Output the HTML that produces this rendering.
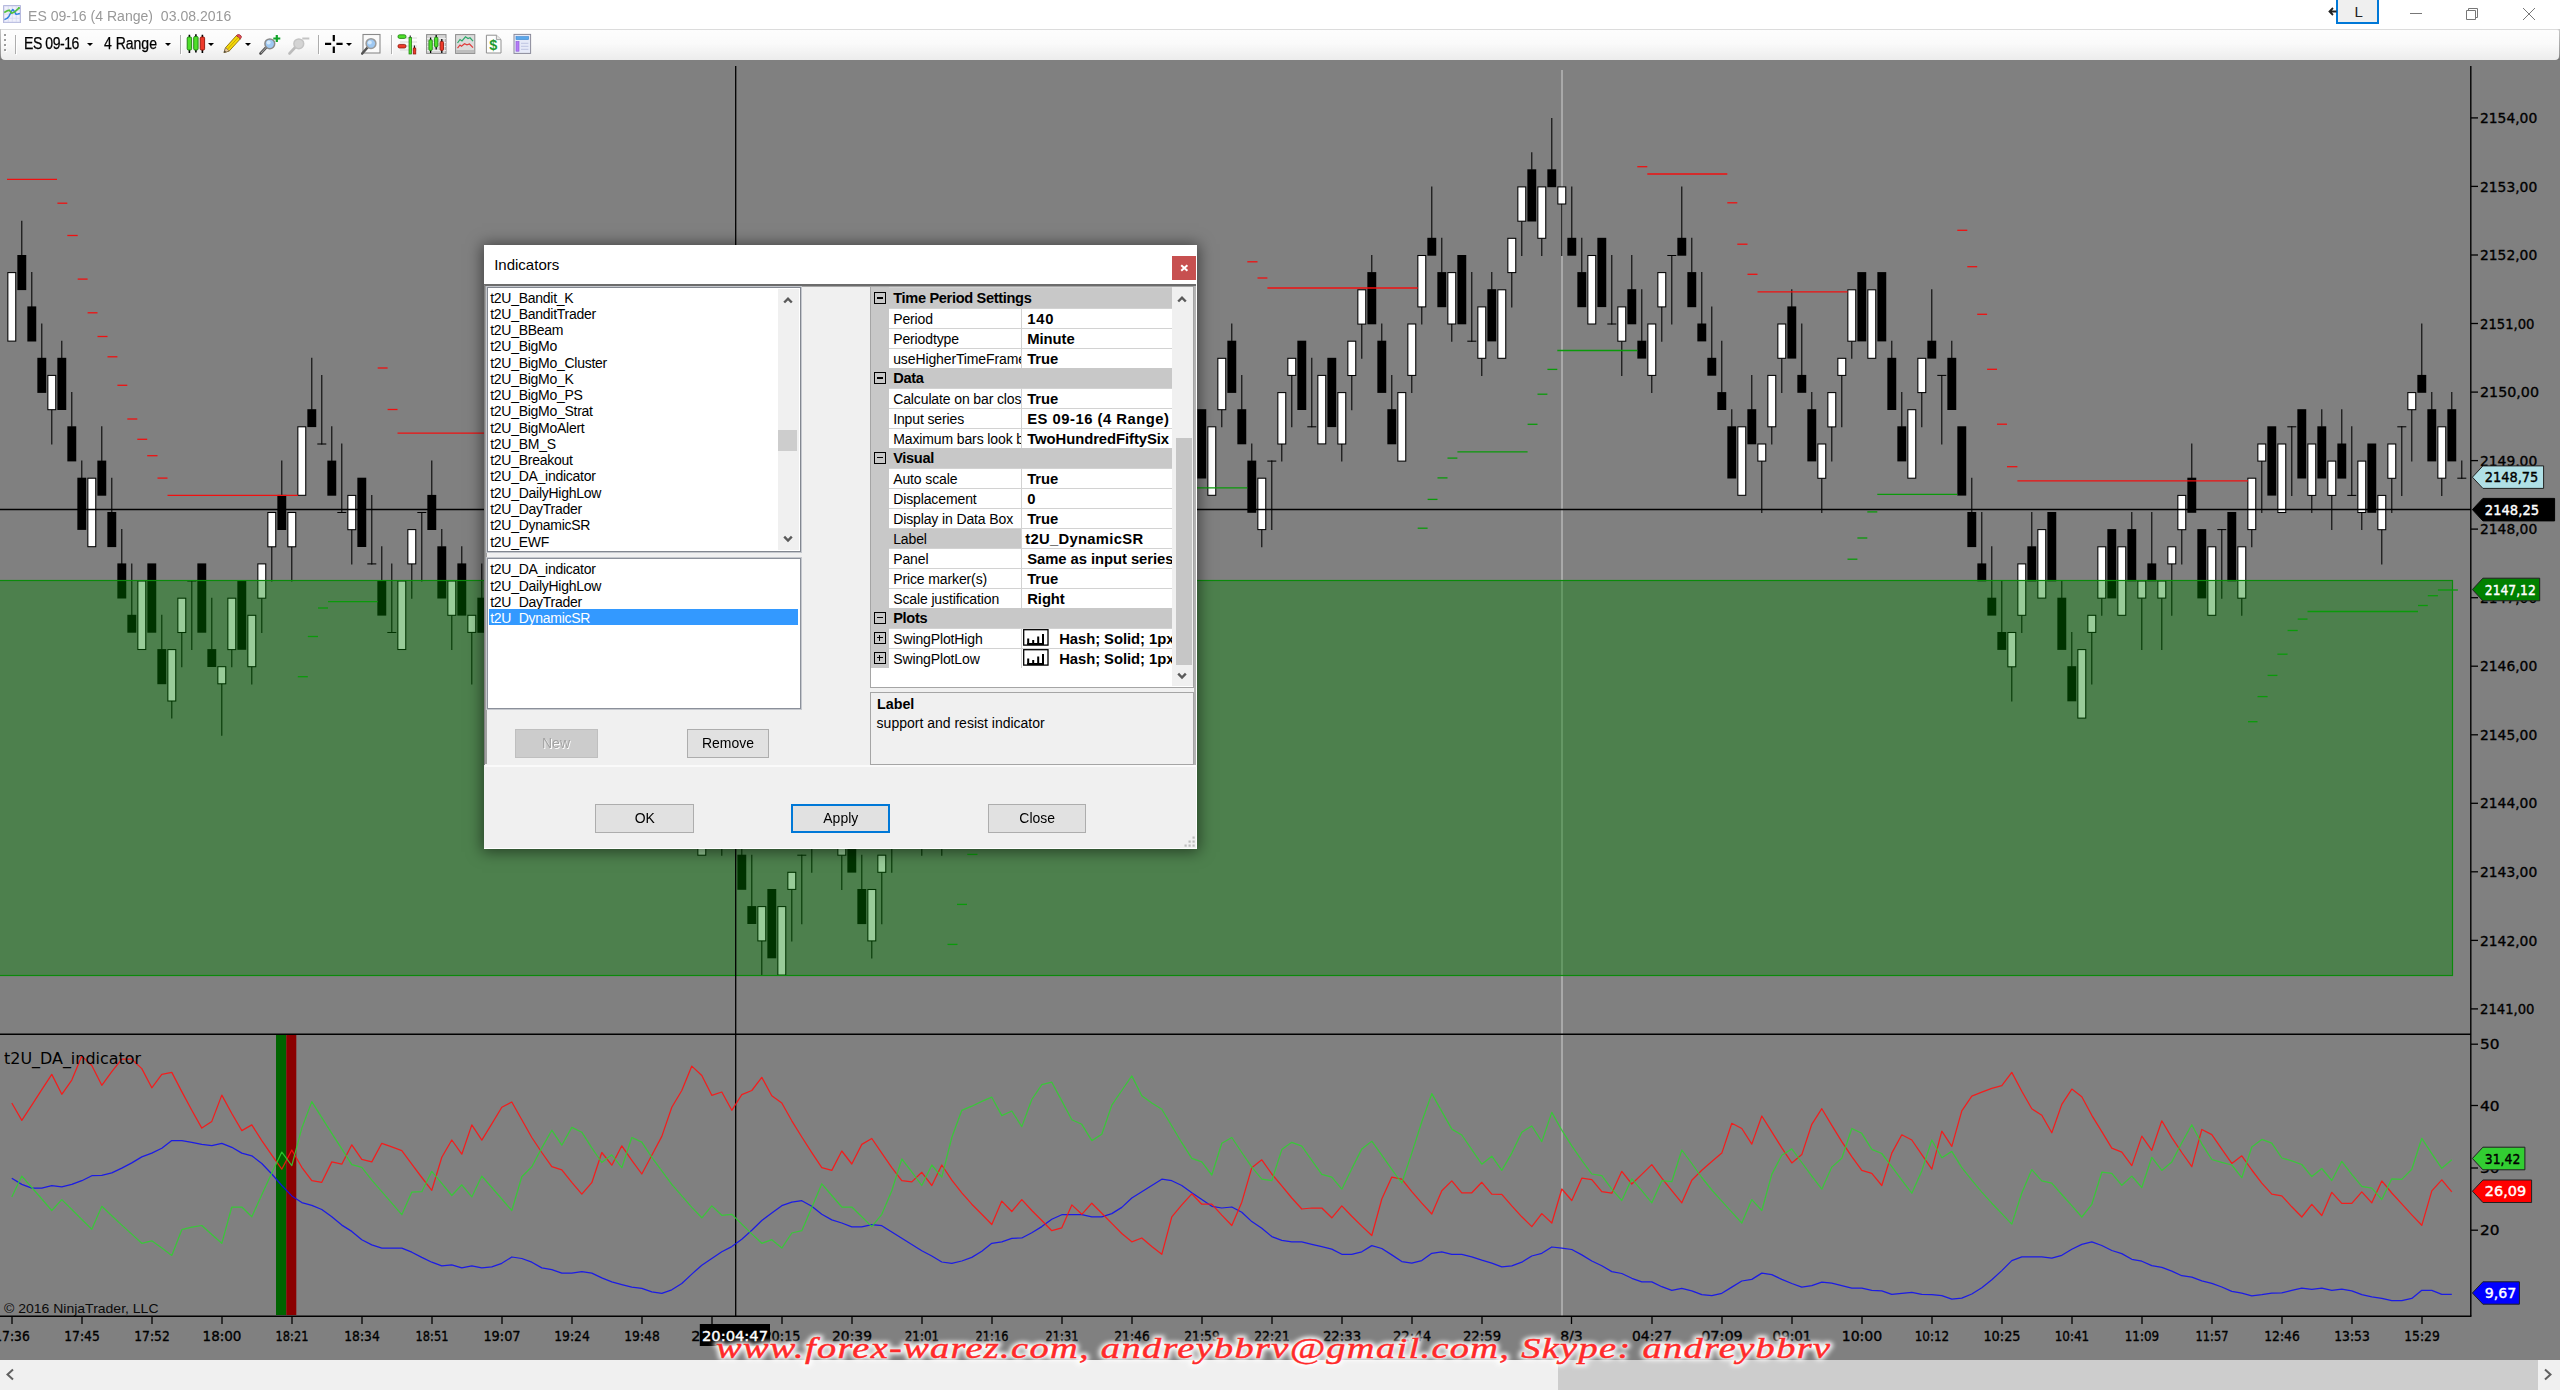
<!DOCTYPE html>
<html lang="en"><head><meta charset="utf-8"><title>ES 09-16 (4 Range) 03.08.2016</title>
<style>
html,body{margin:0;padding:0;}
body{width:2560px;height:1390px;position:relative;overflow:hidden;background:#808080;font-family:"Liberation Sans",sans-serif;}
.abs{position:absolute;}
.t{position:absolute;white-space:nowrap;color:#000;}
#titlebar{left:0;top:0;width:2560px;height:29px;background:#fff;}
#toolbarbg{left:0;top:29px;width:2560px;height:31px;background:linear-gradient(#c8c8c8,#9a9a9a 80%,#707070);}
#toolbar{left:0.8px;top:29px;width:2558.3px;height:31px;background:linear-gradient(#fdfdfd,#fafafa 45%,#ececec);border-top:1px solid #dcdcdc;box-sizing:border-box;border-radius:0 2px 4px 4px;}
.sep{position:absolute;top:35px;width:1px;height:19px;background:#adadad;box-shadow:1px 1px 0 #fff;}
.dd{position:absolute;top:42.8px;width:0;height:0;margin-left:-0.5px;border-left:3.6px solid transparent;border-right:3.6px solid transparent;border-top:3.9px solid #000;}
#scroll{left:0;top:1360px;width:2560px;height:30px;background:#f0f0f0;}
#thumb{left:1557.5px;top:1360px;width:980.5px;height:30px;background:#cdcdcd;}
/* dialog */
#dlg{left:484px;top:245px;width:713px;height:604px;background:#f0f0f0;box-shadow:0 1px 14px 2px rgba(0,0,0,.50);}
#dlgtitle{left:0;top:0;width:713px;height:40px;background:#fff;}
#dlgclose{left:688px;top:11px;width:24px;height:24px;background:#c75050;}
.lb{position:absolute;background:#fff;border:1px solid #8b909a;box-shadow:0 0 0 1px #c5c8ce;box-sizing:border-box;}
.li{position:absolute;left:2.6px;font-size:14px;letter-spacing:-0.27px;line-height:16px;white-space:nowrap;color:#000;}
.btn span{display:inline-block;transform:scaleX(.93);}
.btn{position:absolute;box-sizing:border-box;border:1px solid #adadad;background:#e1e1e1;font-size:15px;text-align:center;color:#000;}
.pgcat{position:absolute;left:0;width:300.8px;height:20px;background:#c8c8c8;}
.pgn{position:absolute;left:18px;width:132px;height:19px;background:#fff;overflow:hidden;}
.pgv{position:absolute;left:151px;width:149.8px;height:19px;background:#fff;overflow:hidden;}
.pgn span,.pgv span,.pgcat span{position:absolute;top:1px;line-height:19.5px;white-space:nowrap;}
.pgn span{left:4px;font-size:14px;letter-spacing:-0.12px;}
.pgv span{left:5px;font-size:14.8px;font-weight:bold;letter-spacing:-0.05px;}
.pgcat span{left:22px;font-size:14.6px;font-weight:bold;letter-spacing:-0.33px;line-height:19px;}
.box{position:absolute;left:2.5px;width:10px;height:10px;border:1.2px solid #000;box-sizing:content-box;}
.box i{position:absolute;left:2px;top:4.4px;width:6px;height:1.2px;background:#000;}
.box b{position:absolute;left:4.4px;top:2px;width:1.2px;height:6px;background:#000;}
</style></head><body>
<svg class="chart" width="2560" height="1390" viewBox="0 0 2560 1390" style="position:absolute;left:0;top:0">
<rect x="0" y="60" width="2560" height="1300" fill="#808080"/>
<line x1="1562" y1="70" x2="1562" y2="1316" stroke="#c4c4c4" stroke-width="1.2"/>
<g stroke="#000" stroke-width="1.05" shape-rendering="geometricPrecision">
<rect x="7.85" y="272.6" width="7.9" height="68.5" fill="#fff"/>
<line x1="21.8" y1="220.7" x2="21.8" y2="255.5"/>
<rect x="17.35" y="255.0" width="8.9" height="35.1" fill="#000" stroke="none"/>
<line x1="31.8" y1="272.1" x2="31.8" y2="306.9"/>
<rect x="27.35" y="306.4" width="8.9" height="35.1" fill="#000" stroke="none"/>
<line x1="41.8" y1="323.5" x2="41.8" y2="358.3"/>
<rect x="37.35" y="357.8" width="8.9" height="35.1" fill="#000" stroke="none"/>
<line x1="51.8" y1="409.7" x2="51.8" y2="444.5"/>
<rect x="47.85" y="375.4" width="7.9" height="34.3" fill="#fff"/>
<line x1="61.8" y1="340.7" x2="61.8" y2="358.3"/>
<rect x="57.35" y="357.8" width="8.9" height="52.2" fill="#000" stroke="none"/>
<line x1="71.8" y1="392.1" x2="71.8" y2="426.8"/>
<rect x="67.35" y="426.3" width="8.9" height="35.1" fill="#000" stroke="none"/>
<line x1="81.8" y1="460.6" x2="81.8" y2="478.2"/>
<rect x="77.35" y="477.7" width="8.9" height="52.2" fill="#000" stroke="none"/>
<rect x="87.85" y="478.2" width="7.9" height="68.5" fill="#fff"/>
<line x1="101.8" y1="426.3" x2="101.8" y2="461.1"/>
<rect x="97.35" y="460.6" width="8.9" height="35.1" fill="#000" stroke="none"/>
<line x1="111.8" y1="477.7" x2="111.8" y2="512.5"/>
<rect x="107.35" y="512.0" width="8.9" height="35.1" fill="#000" stroke="none"/>
<line x1="121.8" y1="529.1" x2="121.8" y2="563.9"/>
<rect x="117.35" y="563.4" width="8.9" height="35.1" fill="#000" stroke="none"/>
<line x1="131.8" y1="563.4" x2="131.8" y2="615.3"/>
<rect x="127.35" y="614.8" width="8.9" height="17.9" fill="#000" stroke="none"/>
<rect x="137.85" y="581.0" width="7.9" height="68.5" fill="#fff"/>
<rect x="147.35" y="563.4" width="8.9" height="69.3" fill="#000" stroke="none"/>
<line x1="161.8" y1="614.8" x2="161.8" y2="649.6"/>
<rect x="157.35" y="649.1" width="8.9" height="35.1" fill="#000" stroke="none"/>
<line x1="171.8" y1="701.0" x2="171.8" y2="718.6"/>
<rect x="167.85" y="649.6" width="7.9" height="51.4" fill="#fff"/>
<line x1="181.8" y1="632.5" x2="181.8" y2="667.2"/>
<rect x="177.85" y="598.2" width="7.9" height="34.3" fill="#fff"/>
<line x1="191.8" y1="580.5" x2="191.8" y2="650.1"/>
<line x1="187.3" y1="581.0" x2="196.3" y2="581.0"/>
<rect x="197.35" y="563.4" width="8.9" height="69.3" fill="#000" stroke="none"/>
<line x1="211.8" y1="597.7" x2="211.8" y2="649.6"/>
<rect x="207.35" y="649.1" width="8.9" height="17.9" fill="#000" stroke="none"/>
<line x1="221.8" y1="683.9" x2="221.8" y2="735.8"/>
<rect x="217.85" y="666.7" width="7.9" height="17.1" fill="#fff"/>
<line x1="231.8" y1="649.6" x2="231.8" y2="667.2"/>
<rect x="227.85" y="598.2" width="7.9" height="51.4" fill="#fff"/>
<rect x="237.35" y="580.5" width="8.9" height="69.3" fill="#000" stroke="none"/>
<line x1="251.8" y1="666.7" x2="251.8" y2="684.4"/>
<rect x="247.85" y="615.3" width="7.9" height="51.4" fill="#fff"/>
<line x1="261.8" y1="598.2" x2="261.8" y2="633.0"/>
<rect x="257.85" y="563.9" width="7.9" height="34.3" fill="#fff"/>
<line x1="271.8" y1="546.8" x2="271.8" y2="581.5"/>
<rect x="267.85" y="512.5" width="7.9" height="34.3" fill="#fff"/>
<line x1="281.8" y1="460.6" x2="281.8" y2="495.4"/>
<rect x="277.35" y="494.9" width="8.9" height="35.1" fill="#000" stroke="none"/>
<line x1="291.8" y1="546.8" x2="291.8" y2="581.5"/>
<rect x="287.85" y="512.5" width="7.9" height="34.3" fill="#fff"/>
<rect x="297.85" y="426.8" width="7.9" height="68.5" fill="#fff"/>
<line x1="311.8" y1="357.8" x2="311.8" y2="409.7"/>
<rect x="307.35" y="409.2" width="8.9" height="17.9" fill="#000" stroke="none"/>
<line x1="321.8" y1="374.9" x2="321.8" y2="444.5"/>
<line x1="317.3" y1="444.0" x2="326.3" y2="444.0"/>
<line x1="331.8" y1="426.3" x2="331.8" y2="461.1"/>
<rect x="327.35" y="460.6" width="8.9" height="35.1" fill="#000" stroke="none"/>
<line x1="341.8" y1="443.5" x2="341.8" y2="513.0"/>
<line x1="337.3" y1="512.5" x2="346.3" y2="512.5"/>
<line x1="351.8" y1="529.6" x2="351.8" y2="564.4"/>
<rect x="347.85" y="495.4" width="7.9" height="34.3" fill="#fff"/>
<rect x="357.35" y="477.7" width="8.9" height="69.3" fill="#000" stroke="none"/>
<line x1="371.8" y1="494.9" x2="371.8" y2="564.4"/>
<line x1="367.3" y1="563.9" x2="376.3" y2="563.9"/>
<line x1="381.8" y1="546.3" x2="381.8" y2="581.0"/>
<rect x="377.35" y="580.5" width="8.9" height="35.1" fill="#000" stroke="none"/>
<line x1="391.8" y1="563.4" x2="391.8" y2="633.0"/>
<line x1="387.3" y1="632.5" x2="396.3" y2="632.5"/>
<rect x="397.85" y="581.0" width="7.9" height="68.5" fill="#fff"/>
<line x1="411.8" y1="563.9" x2="411.8" y2="598.7"/>
<rect x="407.85" y="529.6" width="7.9" height="34.3" fill="#fff"/>
<line x1="421.8" y1="512.0" x2="421.8" y2="581.5"/>
<line x1="417.3" y1="512.5" x2="426.3" y2="512.5"/>
<line x1="431.8" y1="460.6" x2="431.8" y2="495.4"/>
<rect x="427.35" y="494.9" width="8.9" height="35.1" fill="#000" stroke="none"/>
<line x1="441.8" y1="529.1" x2="441.8" y2="546.8"/>
<rect x="437.35" y="546.3" width="8.9" height="52.2" fill="#000" stroke="none"/>
<line x1="451.8" y1="615.3" x2="451.8" y2="650.1"/>
<rect x="447.85" y="581.0" width="7.9" height="34.3" fill="#fff"/>
<line x1="461.8" y1="546.3" x2="461.8" y2="563.9"/>
<rect x="457.35" y="563.4" width="8.9" height="52.2" fill="#000" stroke="none"/>
<line x1="471.8" y1="632.5" x2="471.8" y2="684.4"/>
<rect x="467.85" y="615.3" width="7.9" height="17.1" fill="#fff"/>
<line x1="481.8" y1="563.4" x2="481.8" y2="598.2"/>
<rect x="477.35" y="597.7" width="8.9" height="35.1" fill="#000" stroke="none"/>
<rect x="697.85" y="820.9" width="7.9" height="34.3" fill="#fff"/>
<line x1="721.8" y1="820.9" x2="721.8" y2="855.7"/>
<rect x="717.85" y="786.7" width="7.9" height="34.3" fill="#fff"/>
<line x1="741.8" y1="820.4" x2="741.8" y2="855.2"/>
<rect x="737.35" y="854.7" width="8.9" height="35.1" fill="#000" stroke="none"/>
<line x1="751.8" y1="854.7" x2="751.8" y2="906.6"/>
<rect x="747.35" y="906.1" width="8.9" height="17.9" fill="#000" stroke="none"/>
<line x1="761.8" y1="940.9" x2="761.8" y2="975.7"/>
<rect x="757.85" y="906.6" width="7.9" height="34.3" fill="#fff"/>
<rect x="767.35" y="889.0" width="8.9" height="69.3" fill="#000" stroke="none"/>
<rect x="777.85" y="906.6" width="7.9" height="68.5" fill="#fff"/>
<line x1="791.8" y1="889.5" x2="791.8" y2="941.4"/>
<rect x="787.85" y="872.3" width="7.9" height="17.1" fill="#fff"/>
<line x1="801.8" y1="854.7" x2="801.8" y2="924.2"/>
<line x1="797.3" y1="855.2" x2="806.3" y2="855.2"/>
<line x1="811.8" y1="838.1" x2="811.8" y2="872.8"/>
<rect x="807.85" y="803.8" width="7.9" height="34.3" fill="#fff"/>
<line x1="841.8" y1="855.2" x2="841.8" y2="890.0"/>
<rect x="837.85" y="820.9" width="7.9" height="34.3" fill="#fff"/>
<rect x="847.35" y="803.3" width="8.9" height="69.3" fill="#000" stroke="none"/>
<line x1="861.8" y1="854.7" x2="861.8" y2="889.5"/>
<rect x="857.35" y="889.0" width="8.9" height="35.1" fill="#000" stroke="none"/>
<line x1="871.8" y1="940.9" x2="871.8" y2="958.5"/>
<rect x="867.85" y="889.5" width="7.9" height="51.4" fill="#fff"/>
<line x1="881.8" y1="872.3" x2="881.8" y2="924.2"/>
<rect x="877.85" y="855.2" width="7.9" height="17.1" fill="#fff"/>
<line x1="891.8" y1="838.1" x2="891.8" y2="872.8"/>
<rect x="887.85" y="803.8" width="7.9" height="34.3" fill="#fff"/>
<line x1="921.8" y1="820.9" x2="921.8" y2="855.7"/>
<rect x="917.85" y="786.7" width="7.9" height="34.3" fill="#fff"/>
<line x1="941.8" y1="820.9" x2="941.8" y2="855.7"/>
<rect x="937.85" y="786.7" width="7.9" height="34.3" fill="#fff"/>
<rect x="1197.35" y="409.2" width="8.9" height="69.3" fill="#000" stroke="none"/>
<rect x="1207.85" y="426.8" width="7.9" height="68.5" fill="#fff"/>
<line x1="1221.8" y1="409.7" x2="1221.8" y2="427.3"/>
<rect x="1217.85" y="358.3" width="7.9" height="51.4" fill="#fff"/>
<line x1="1231.8" y1="323.5" x2="1231.8" y2="341.2"/>
<rect x="1227.35" y="340.7" width="8.9" height="52.2" fill="#000" stroke="none"/>
<line x1="1241.8" y1="374.9" x2="1241.8" y2="409.7"/>
<rect x="1237.35" y="409.2" width="8.9" height="35.1" fill="#000" stroke="none"/>
<line x1="1251.8" y1="443.5" x2="1251.8" y2="461.1"/>
<rect x="1247.35" y="460.6" width="8.9" height="52.2" fill="#000" stroke="none"/>
<line x1="1261.8" y1="529.6" x2="1261.8" y2="547.3"/>
<rect x="1257.85" y="478.2" width="7.9" height="51.4" fill="#fff"/>
<line x1="1271.8" y1="460.6" x2="1271.8" y2="530.1"/>
<line x1="1267.3" y1="461.1" x2="1276.3" y2="461.1"/>
<line x1="1281.8" y1="444.0" x2="1281.8" y2="461.6"/>
<rect x="1277.85" y="392.6" width="7.9" height="51.4" fill="#fff"/>
<line x1="1291.8" y1="375.4" x2="1291.8" y2="427.3"/>
<rect x="1287.85" y="358.3" width="7.9" height="17.1" fill="#fff"/>
<rect x="1297.35" y="340.7" width="8.9" height="69.3" fill="#000" stroke="none"/>
<line x1="1311.8" y1="357.8" x2="1311.8" y2="427.3"/>
<line x1="1307.3" y1="426.8" x2="1316.3" y2="426.8"/>
<rect x="1317.85" y="375.4" width="7.9" height="68.5" fill="#fff"/>
<rect x="1327.35" y="357.8" width="8.9" height="69.3" fill="#000" stroke="none"/>
<line x1="1341.8" y1="444.0" x2="1341.8" y2="461.6"/>
<rect x="1337.85" y="392.6" width="7.9" height="51.4" fill="#fff"/>
<line x1="1351.8" y1="375.4" x2="1351.8" y2="410.2"/>
<rect x="1347.85" y="341.2" width="7.9" height="34.3" fill="#fff"/>
<line x1="1361.8" y1="324.0" x2="1361.8" y2="358.8"/>
<rect x="1357.85" y="289.8" width="7.9" height="34.3" fill="#fff"/>
<line x1="1371.8" y1="255.0" x2="1371.8" y2="272.6"/>
<rect x="1367.35" y="272.1" width="8.9" height="52.2" fill="#000" stroke="none"/>
<line x1="1381.8" y1="323.5" x2="1381.8" y2="341.2"/>
<rect x="1377.35" y="340.7" width="8.9" height="52.2" fill="#000" stroke="none"/>
<line x1="1391.8" y1="374.9" x2="1391.8" y2="409.7"/>
<rect x="1387.35" y="409.2" width="8.9" height="35.1" fill="#000" stroke="none"/>
<rect x="1397.85" y="392.6" width="7.9" height="68.5" fill="#fff"/>
<line x1="1411.8" y1="375.4" x2="1411.8" y2="393.1"/>
<rect x="1407.85" y="324.0" width="7.9" height="51.4" fill="#fff"/>
<line x1="1421.8" y1="306.9" x2="1421.8" y2="324.5"/>
<rect x="1417.85" y="255.5" width="7.9" height="51.4" fill="#fff"/>
<line x1="1431.8" y1="186.4" x2="1431.8" y2="238.3"/>
<rect x="1427.35" y="237.8" width="8.9" height="17.9" fill="#000" stroke="none"/>
<line x1="1441.8" y1="237.8" x2="1441.8" y2="272.6"/>
<rect x="1437.35" y="272.1" width="8.9" height="35.1" fill="#000" stroke="none"/>
<line x1="1451.8" y1="324.0" x2="1451.8" y2="341.7"/>
<rect x="1447.85" y="272.6" width="7.9" height="51.4" fill="#fff"/>
<rect x="1457.35" y="255.0" width="8.9" height="69.3" fill="#000" stroke="none"/>
<line x1="1471.8" y1="272.1" x2="1471.8" y2="341.7"/>
<line x1="1467.3" y1="341.2" x2="1476.3" y2="341.2"/>
<line x1="1481.8" y1="358.3" x2="1481.8" y2="375.9"/>
<rect x="1477.85" y="306.9" width="7.9" height="51.4" fill="#fff"/>
<line x1="1491.8" y1="272.1" x2="1491.8" y2="289.8"/>
<rect x="1487.35" y="289.2" width="8.9" height="52.2" fill="#000" stroke="none"/>
<rect x="1497.85" y="289.8" width="7.9" height="68.5" fill="#fff"/>
<line x1="1511.8" y1="272.6" x2="1511.8" y2="307.4"/>
<rect x="1507.85" y="238.3" width="7.9" height="34.3" fill="#fff"/>
<line x1="1521.8" y1="221.2" x2="1521.8" y2="256.0"/>
<rect x="1517.85" y="186.9" width="7.9" height="34.3" fill="#fff"/>
<line x1="1531.8" y1="152.2" x2="1531.8" y2="169.8"/>
<rect x="1527.35" y="169.3" width="8.9" height="52.2" fill="#000" stroke="none"/>
<line x1="1541.8" y1="238.3" x2="1541.8" y2="256.0"/>
<rect x="1537.85" y="186.9" width="7.9" height="51.4" fill="#fff"/>
<line x1="1551.8" y1="117.9" x2="1551.8" y2="169.8"/>
<rect x="1547.35" y="169.3" width="8.9" height="17.9" fill="#000" stroke="none"/>
<line x1="1561.8" y1="204.1" x2="1561.8" y2="256.0"/>
<rect x="1557.85" y="186.9" width="7.9" height="17.1" fill="#fff"/>
<line x1="1571.8" y1="186.4" x2="1571.8" y2="238.3"/>
<rect x="1567.35" y="237.8" width="8.9" height="17.9" fill="#000" stroke="none"/>
<line x1="1581.8" y1="237.8" x2="1581.8" y2="272.6"/>
<rect x="1577.35" y="272.1" width="8.9" height="35.1" fill="#000" stroke="none"/>
<rect x="1587.85" y="255.5" width="7.9" height="68.5" fill="#fff"/>
<rect x="1597.35" y="237.8" width="8.9" height="69.3" fill="#000" stroke="none"/>
<line x1="1611.8" y1="255.0" x2="1611.8" y2="324.5"/>
<line x1="1607.3" y1="324.0" x2="1616.3" y2="324.0"/>
<line x1="1621.8" y1="341.2" x2="1621.8" y2="375.9"/>
<rect x="1617.85" y="306.9" width="7.9" height="34.3" fill="#fff"/>
<line x1="1631.8" y1="255.0" x2="1631.8" y2="289.8"/>
<rect x="1627.35" y="289.2" width="8.9" height="35.1" fill="#000" stroke="none"/>
<line x1="1641.8" y1="289.2" x2="1641.8" y2="341.2"/>
<rect x="1637.35" y="340.7" width="8.9" height="17.9" fill="#000" stroke="none"/>
<line x1="1651.8" y1="375.4" x2="1651.8" y2="393.1"/>
<rect x="1647.85" y="324.0" width="7.9" height="51.4" fill="#fff"/>
<line x1="1661.8" y1="306.9" x2="1661.8" y2="341.7"/>
<rect x="1657.85" y="272.6" width="7.9" height="34.3" fill="#fff"/>
<line x1="1671.8" y1="255.0" x2="1671.8" y2="324.5"/>
<line x1="1667.3" y1="255.5" x2="1676.3" y2="255.5"/>
<line x1="1681.8" y1="186.4" x2="1681.8" y2="238.3"/>
<rect x="1677.35" y="237.8" width="8.9" height="17.9" fill="#000" stroke="none"/>
<line x1="1691.8" y1="237.8" x2="1691.8" y2="272.6"/>
<rect x="1687.35" y="272.1" width="8.9" height="35.1" fill="#000" stroke="none"/>
<line x1="1701.8" y1="272.1" x2="1701.8" y2="324.0"/>
<rect x="1697.35" y="323.5" width="8.9" height="17.9" fill="#000" stroke="none"/>
<line x1="1711.8" y1="306.4" x2="1711.8" y2="358.3"/>
<rect x="1707.35" y="357.8" width="8.9" height="17.9" fill="#000" stroke="none"/>
<line x1="1721.8" y1="340.7" x2="1721.8" y2="392.6"/>
<rect x="1717.35" y="392.1" width="8.9" height="17.9" fill="#000" stroke="none"/>
<line x1="1731.8" y1="409.2" x2="1731.8" y2="426.8"/>
<rect x="1727.35" y="426.3" width="8.9" height="52.2" fill="#000" stroke="none"/>
<rect x="1737.85" y="426.8" width="7.9" height="68.5" fill="#fff"/>
<line x1="1751.8" y1="374.9" x2="1751.8" y2="409.7"/>
<rect x="1747.35" y="409.2" width="8.9" height="35.1" fill="#000" stroke="none"/>
<line x1="1761.8" y1="461.1" x2="1761.8" y2="513.0"/>
<rect x="1757.85" y="444.0" width="7.9" height="17.1" fill="#fff"/>
<line x1="1771.8" y1="426.8" x2="1771.8" y2="444.5"/>
<rect x="1767.85" y="375.4" width="7.9" height="51.4" fill="#fff"/>
<line x1="1781.8" y1="358.3" x2="1781.8" y2="393.1"/>
<rect x="1777.85" y="324.0" width="7.9" height="34.3" fill="#fff"/>
<line x1="1791.8" y1="289.2" x2="1791.8" y2="306.9"/>
<rect x="1787.35" y="306.4" width="8.9" height="52.2" fill="#000" stroke="none"/>
<line x1="1801.8" y1="323.5" x2="1801.8" y2="375.4"/>
<rect x="1797.35" y="374.9" width="8.9" height="17.9" fill="#000" stroke="none"/>
<line x1="1811.8" y1="392.1" x2="1811.8" y2="409.7"/>
<rect x="1807.35" y="409.2" width="8.9" height="52.2" fill="#000" stroke="none"/>
<line x1="1821.8" y1="478.2" x2="1821.8" y2="513.0"/>
<rect x="1817.85" y="444.0" width="7.9" height="34.3" fill="#fff"/>
<line x1="1831.8" y1="426.8" x2="1831.8" y2="461.6"/>
<rect x="1827.85" y="392.6" width="7.9" height="34.3" fill="#fff"/>
<line x1="1841.8" y1="375.4" x2="1841.8" y2="427.3"/>
<rect x="1837.85" y="358.3" width="7.9" height="17.1" fill="#fff"/>
<line x1="1851.8" y1="341.2" x2="1851.8" y2="358.8"/>
<rect x="1847.85" y="289.8" width="7.9" height="51.4" fill="#fff"/>
<rect x="1857.35" y="272.1" width="8.9" height="69.3" fill="#000" stroke="none"/>
<rect x="1867.85" y="289.8" width="7.9" height="68.5" fill="#fff"/>
<rect x="1877.35" y="272.1" width="8.9" height="69.3" fill="#000" stroke="none"/>
<line x1="1891.8" y1="340.7" x2="1891.8" y2="358.3"/>
<rect x="1887.35" y="357.8" width="8.9" height="52.2" fill="#000" stroke="none"/>
<line x1="1901.8" y1="392.1" x2="1901.8" y2="426.8"/>
<rect x="1897.35" y="426.3" width="8.9" height="35.1" fill="#000" stroke="none"/>
<rect x="1907.85" y="409.7" width="7.9" height="68.5" fill="#fff"/>
<line x1="1921.8" y1="392.6" x2="1921.8" y2="427.3"/>
<rect x="1917.85" y="358.3" width="7.9" height="34.3" fill="#fff"/>
<line x1="1931.8" y1="289.2" x2="1931.8" y2="341.2"/>
<rect x="1927.35" y="340.7" width="8.9" height="17.9" fill="#000" stroke="none"/>
<line x1="1941.8" y1="374.9" x2="1941.8" y2="444.5"/>
<line x1="1937.3" y1="375.4" x2="1946.3" y2="375.4"/>
<line x1="1951.8" y1="340.7" x2="1951.8" y2="358.3"/>
<rect x="1947.35" y="357.8" width="8.9" height="52.2" fill="#000" stroke="none"/>
<rect x="1957.35" y="426.3" width="8.9" height="69.3" fill="#000" stroke="none"/>
<line x1="1971.8" y1="477.7" x2="1971.8" y2="512.5"/>
<rect x="1967.35" y="512.0" width="8.9" height="35.1" fill="#000" stroke="none"/>
<line x1="1981.8" y1="512.0" x2="1981.8" y2="563.9"/>
<rect x="1977.35" y="563.4" width="8.9" height="17.9" fill="#000" stroke="none"/>
<line x1="1991.8" y1="546.3" x2="1991.8" y2="598.2"/>
<rect x="1987.35" y="597.7" width="8.9" height="17.9" fill="#000" stroke="none"/>
<line x1="2001.8" y1="580.5" x2="2001.8" y2="632.5"/>
<rect x="1997.35" y="632.0" width="8.9" height="17.9" fill="#000" stroke="none"/>
<line x1="2011.8" y1="666.7" x2="2011.8" y2="701.5"/>
<rect x="2007.85" y="632.5" width="7.9" height="34.3" fill="#fff"/>
<line x1="2021.8" y1="615.3" x2="2021.8" y2="633.0"/>
<rect x="2017.85" y="563.9" width="7.9" height="51.4" fill="#fff"/>
<line x1="2031.8" y1="512.0" x2="2031.8" y2="546.8"/>
<rect x="2027.35" y="546.3" width="8.9" height="35.1" fill="#000" stroke="none"/>
<rect x="2037.85" y="529.6" width="7.9" height="68.5" fill="#fff"/>
<rect x="2047.35" y="512.0" width="8.9" height="69.3" fill="#000" stroke="none"/>
<line x1="2061.8" y1="580.5" x2="2061.8" y2="598.2"/>
<rect x="2057.35" y="597.7" width="8.9" height="52.2" fill="#000" stroke="none"/>
<line x1="2071.8" y1="632.0" x2="2071.8" y2="666.7"/>
<rect x="2067.35" y="666.2" width="8.9" height="35.1" fill="#000" stroke="none"/>
<rect x="2077.85" y="649.6" width="7.9" height="68.5" fill="#fff"/>
<line x1="2091.8" y1="632.5" x2="2091.8" y2="684.4"/>
<rect x="2087.85" y="615.3" width="7.9" height="17.1" fill="#fff"/>
<line x1="2101.8" y1="598.2" x2="2101.8" y2="615.8"/>
<rect x="2097.85" y="546.8" width="7.9" height="51.4" fill="#fff"/>
<rect x="2107.35" y="529.1" width="8.9" height="69.3" fill="#000" stroke="none"/>
<rect x="2117.85" y="546.8" width="7.9" height="68.5" fill="#fff"/>
<line x1="2131.8" y1="512.0" x2="2131.8" y2="529.6"/>
<rect x="2127.35" y="529.1" width="8.9" height="52.2" fill="#000" stroke="none"/>
<line x1="2141.8" y1="598.2" x2="2141.8" y2="650.1"/>
<rect x="2137.85" y="581.0" width="7.9" height="17.1" fill="#fff"/>
<line x1="2151.8" y1="512.0" x2="2151.8" y2="563.9"/>
<rect x="2147.35" y="563.4" width="8.9" height="17.9" fill="#000" stroke="none"/>
<line x1="2161.8" y1="598.2" x2="2161.8" y2="650.1"/>
<rect x="2157.85" y="581.0" width="7.9" height="17.1" fill="#fff"/>
<line x1="2171.8" y1="563.9" x2="2171.8" y2="615.8"/>
<rect x="2167.85" y="546.8" width="7.9" height="17.1" fill="#fff"/>
<line x1="2181.8" y1="529.6" x2="2181.8" y2="564.4"/>
<rect x="2177.85" y="495.4" width="7.9" height="34.3" fill="#fff"/>
<line x1="2191.8" y1="443.5" x2="2191.8" y2="478.2"/>
<rect x="2187.35" y="477.7" width="8.9" height="35.1" fill="#000" stroke="none"/>
<rect x="2197.35" y="529.1" width="8.9" height="69.3" fill="#000" stroke="none"/>
<rect x="2207.85" y="546.8" width="7.9" height="68.5" fill="#fff"/>
<line x1="2221.8" y1="529.1" x2="2221.8" y2="598.7"/>
<line x1="2217.3" y1="529.6" x2="2226.3" y2="529.6"/>
<rect x="2227.35" y="512.0" width="8.9" height="69.3" fill="#000" stroke="none"/>
<line x1="2241.8" y1="598.2" x2="2241.8" y2="615.8"/>
<rect x="2237.85" y="546.8" width="7.9" height="51.4" fill="#fff"/>
<line x1="2251.8" y1="529.6" x2="2251.8" y2="547.3"/>
<rect x="2247.85" y="478.2" width="7.9" height="51.4" fill="#fff"/>
<line x1="2261.8" y1="461.1" x2="2261.8" y2="513.0"/>
<rect x="2257.85" y="444.0" width="7.9" height="17.1" fill="#fff"/>
<rect x="2267.35" y="426.3" width="8.9" height="69.3" fill="#000" stroke="none"/>
<rect x="2277.85" y="444.0" width="7.9" height="68.5" fill="#fff"/>
<line x1="2291.8" y1="426.3" x2="2291.8" y2="495.9"/>
<line x1="2287.3" y1="426.8" x2="2296.3" y2="426.8"/>
<rect x="2297.35" y="409.2" width="8.9" height="69.3" fill="#000" stroke="none"/>
<line x1="2311.8" y1="495.4" x2="2311.8" y2="513.0"/>
<rect x="2307.85" y="444.0" width="7.9" height="51.4" fill="#fff"/>
<line x1="2321.8" y1="409.2" x2="2321.8" y2="426.8"/>
<rect x="2317.35" y="426.3" width="8.9" height="52.2" fill="#000" stroke="none"/>
<line x1="2331.8" y1="495.4" x2="2331.8" y2="530.1"/>
<rect x="2327.85" y="461.1" width="7.9" height="34.3" fill="#fff"/>
<line x1="2341.8" y1="409.2" x2="2341.8" y2="444.0"/>
<rect x="2337.35" y="443.5" width="8.9" height="35.1" fill="#000" stroke="none"/>
<line x1="2351.8" y1="426.3" x2="2351.8" y2="495.9"/>
<line x1="2347.3" y1="495.4" x2="2356.3" y2="495.4"/>
<line x1="2361.8" y1="512.5" x2="2361.8" y2="530.1"/>
<rect x="2357.85" y="461.1" width="7.9" height="51.4" fill="#fff"/>
<rect x="2367.35" y="443.5" width="8.9" height="69.3" fill="#000" stroke="none"/>
<line x1="2381.8" y1="529.6" x2="2381.8" y2="564.4"/>
<rect x="2377.85" y="495.4" width="7.9" height="34.3" fill="#fff"/>
<line x1="2391.8" y1="478.2" x2="2391.8" y2="513.0"/>
<rect x="2387.85" y="444.0" width="7.9" height="34.3" fill="#fff"/>
<line x1="2401.8" y1="426.3" x2="2401.8" y2="495.9"/>
<line x1="2397.3" y1="426.8" x2="2406.3" y2="426.8"/>
<line x1="2411.8" y1="409.7" x2="2411.8" y2="461.6"/>
<rect x="2407.85" y="392.6" width="7.9" height="17.1" fill="#fff"/>
<line x1="2421.8" y1="323.5" x2="2421.8" y2="375.4"/>
<rect x="2417.35" y="374.9" width="8.9" height="17.9" fill="#000" stroke="none"/>
<line x1="2431.8" y1="392.1" x2="2431.8" y2="409.7"/>
<rect x="2427.35" y="409.2" width="8.9" height="52.2" fill="#000" stroke="none"/>
<line x1="2441.8" y1="478.2" x2="2441.8" y2="495.9"/>
<rect x="2437.85" y="426.8" width="7.9" height="51.4" fill="#fff"/>
<line x1="2451.8" y1="392.1" x2="2451.8" y2="409.7"/>
<rect x="2447.35" y="409.2" width="8.9" height="52.2" fill="#000" stroke="none"/>
<line x1="2461.8" y1="460.6" x2="2461.8" y2="478.7"/>
<line x1="2457.3" y1="478.2" x2="2466.3" y2="478.2"/>
</g>
<g stroke="#f01010" stroke-width="1.3">
<line x1="7" y1="179.4" x2="57" y2="179.4"/>
<line x1="57.4" y1="203.2" x2="67.3" y2="203.2"/>
<line x1="67.3" y1="235.5" x2="77.7" y2="235.5"/>
<line x1="77.7" y1="279.1" x2="87.6" y2="279.1"/>
<line x1="87.6" y1="312.8" x2="97.5" y2="312.8"/>
<line x1="97.5" y1="336.5" x2="107.5" y2="336.5"/>
<line x1="107.5" y1="356.8" x2="117.4" y2="356.8"/>
<line x1="117.4" y1="385.3" x2="127.3" y2="385.3"/>
<line x1="127.3" y1="419" x2="137.3" y2="419"/>
<line x1="137.3" y1="439.3" x2="147.2" y2="439.3"/>
<line x1="147.2" y1="455.7" x2="157.5" y2="455.7"/>
<line x1="157.5" y1="478.1" x2="167.5" y2="478.1"/>
<line x1="167.5" y1="495.4" x2="297.8" y2="495.4"/>
<line x1="377.7" y1="368" x2="387.6" y2="368"/>
<line x1="387.6" y1="409.5" x2="397.5" y2="409.5"/>
<line x1="397.5" y1="433.2" x2="490" y2="433.2"/>
<line x1="1247.3" y1="261.8" x2="1257.5" y2="261.8"/>
<line x1="1257.5" y1="278" x2="1267.4" y2="278"/>
<line x1="1267.4" y1="288" x2="1417.7" y2="288"/>
<line x1="1637.3" y1="166.7" x2="1647.3" y2="166.7"/>
<line x1="1647.3" y1="174" x2="1727.3" y2="174"/>
<line x1="1727.3" y1="202.8" x2="1737.3" y2="202.8"/>
<line x1="1737.3" y1="244.2" x2="1747.5" y2="244.2"/>
<line x1="1747.5" y1="274.3" x2="1757.5" y2="274.3"/>
<line x1="1757.5" y1="291.8" x2="1847.5" y2="291.8"/>
<line x1="1957.3" y1="230.3" x2="1967.3" y2="230.3"/>
<line x1="1967.3" y1="266.7" x2="1977.2" y2="266.7"/>
<line x1="1977.2" y1="314.3" x2="1987.1" y2="314.3"/>
<line x1="1987.1" y1="369.3" x2="1997" y2="369.3"/>
<line x1="1997" y1="424.2" x2="2007" y2="424.2"/>
<line x1="2007" y1="466.7" x2="2017.4" y2="466.7"/>
<line x1="2017.4" y1="480.8" x2="2248" y2="480.8"/>
</g>
<rect x="-2" y="580.5" width="2454.5" height="395" fill="rgba(0,128,0,0.40)" stroke="#0b8a0b" stroke-width="1.2"/>
<g stroke="#0a9a0a" stroke-width="1.3">
<line x1="328" y1="601.6" x2="377.7" y2="601.6"/>
<line x1="318" y1="608" x2="328" y2="608"/>
<line x1="307.8" y1="636.5" x2="318" y2="636.5"/>
<line x1="297.8" y1="676.7" x2="307.8" y2="676.7"/>
<line x1="967.3" y1="854.4" x2="977.5" y2="854.4"/>
<line x1="957" y1="904.4" x2="967" y2="904.4"/>
<line x1="947.5" y1="944.4" x2="957.5" y2="944.4"/>
<line x1="1190" y1="487.9" x2="1247.3" y2="487.9"/>
<line x1="1417.7" y1="528.2" x2="1427.6" y2="528.2"/>
<line x1="1427.6" y1="499.4" x2="1437.5" y2="499.4"/>
<line x1="1437.5" y1="477.9" x2="1447.5" y2="477.9"/>
<line x1="1447.5" y1="458.1" x2="1457.4" y2="458.1"/>
<line x1="1457.4" y1="451.8" x2="1527.6" y2="451.8"/>
<line x1="1527.6" y1="424.3" x2="1537.5" y2="424.3"/>
<line x1="1537.5" y1="394.2" x2="1547.4" y2="394.2"/>
<line x1="1547.4" y1="369.4" x2="1557.3" y2="369.4"/>
<line x1="1557.3" y1="350.5" x2="1637.3" y2="350.5"/>
<line x1="1847.5" y1="559.2" x2="1857.4" y2="559.2"/>
<line x1="1857.4" y1="538" x2="1867.3" y2="538"/>
<line x1="1867.3" y1="511.9" x2="1877.3" y2="511.9"/>
<line x1="1877.3" y1="494.4" x2="1957.3" y2="494.4"/>
<line x1="2248" y1="721.7" x2="2257.5" y2="721.7"/>
<line x1="2257.5" y1="696.6" x2="2267.6" y2="696.6"/>
<line x1="2267.6" y1="675.4" x2="2277.4" y2="675.4"/>
<line x1="2277.4" y1="654.2" x2="2287.6" y2="654.2"/>
<line x1="2287.6" y1="630.5" x2="2297.7" y2="630.5"/>
<line x1="2297.7" y1="619.1" x2="2307.5" y2="619.1"/>
<line x1="2307.5" y1="611.5" x2="2418" y2="611.5"/>
<line x1="2418" y1="605.5" x2="2427.8" y2="605.5"/>
<line x1="2427.8" y1="595.7" x2="2437.9" y2="595.7"/>
<line x1="2437.9" y1="590" x2="2457.9" y2="590"/>
</g>
<line x1="0" y1="509.5" x2="2471" y2="509.5" stroke="#000" stroke-width="1.3"/>
<line x1="735.7" y1="66" x2="735.7" y2="1316" stroke="#000" stroke-width="1.3"/>
<line x1="0" y1="1034.3" x2="2471" y2="1034.3" stroke="#000" stroke-width="1.6"/>
<rect x="276" y="1035" width="10.3" height="280" fill="#006400"/>
<rect x="286.3" y="1035" width="10" height="280" fill="#8b0000"/>
<polyline points="11.8,1178.2 21.8,1184.4 31.8,1188.2 41.8,1188.2 51.8,1185.7 61.8,1186.9 71.8,1184.4 81.8,1180.7 91.8,1175.7 101.8,1175.4 111.8,1172.9 121.8,1168.1 131.8,1162.9 141.8,1156.9 151.8,1153.1 161.8,1148.3 171.8,1140.6 181.8,1140.6 191.8,1142.3 201.8,1144.4 211.8,1145.6 221.8,1143.3 231.8,1147.3 241.8,1153.1 251.8,1155.8 261.8,1163.5 271.8,1174.0 281.8,1185.5 291.8,1195.9 301.8,1202.6 311.8,1205.3 321.8,1209.5 331.8,1216.8 341.8,1225.1 351.8,1231.4 361.8,1239.7 371.8,1244.9 381.8,1248.1 391.8,1248.1 401.8,1248.1 411.8,1252.2 421.8,1257.4 431.8,1262.2 441.8,1265.8 451.8,1264.8 461.8,1267.9 471.8,1265.8 481.8,1267.9 491.8,1266.8 501.8,1263.3 511.8,1257.0 521.8,1258.5 531.8,1262.2 541.8,1267.9 551.8,1269.6 561.8,1273.1 571.8,1273.1 581.8,1271.6 591.8,1273.1 601.8,1277.9 611.8,1281.9 621.8,1284.6 631.8,1287.1 641.8,1288.3 651.8,1291.9 661.8,1293.3 671.8,1289.8 681.8,1283.5 691.8,1274.1 701.8,1265.2 711.8,1258.5 721.8,1251.8 731.8,1246.6 741.8,1239.3 751.8,1230.3 761.8,1220.5 771.8,1213.0 781.8,1205.7 791.8,1202.2 801.8,1200.7 811.8,1206.3 821.8,1214.3 831.8,1219.9 841.8,1223.0 851.8,1226.8 861.8,1226.8 871.8,1224.7 881.8,1225.7 891.8,1232.0 901.8,1238.3 911.8,1244.5 921.8,1250.8 931.8,1256.0 941.8,1262.0 951.8,1263.3 961.8,1261.0 971.8,1257.4 981.8,1251.2 991.8,1243.3 1001.8,1241.8 1011.8,1238.3 1021.8,1238.0 1031.8,1232.8 1041.8,1226.6 1051.8,1219.3 1061.8,1214.7 1071.8,1214.7 1081.8,1214.7 1091.8,1216.8 1101.8,1216.8 1111.8,1213.6 1121.8,1207.4 1131.8,1198.0 1141.8,1191.7 1151.8,1185.5 1161.8,1179.2 1171.8,1180.7 1181.8,1185.5 1191.8,1192.8 1201.8,1199.6 1211.8,1206.3 1221.8,1208.0 1231.8,1207.0 1241.8,1212.2 1251.8,1221.6 1261.8,1228.2 1271.8,1236.6 1281.8,1240.3 1291.8,1241.8 1301.8,1241.8 1311.8,1244.3 1321.8,1246.6 1331.8,1249.1 1341.8,1254.3 1351.8,1254.3 1361.8,1251.8 1371.8,1245.6 1381.8,1248.5 1391.8,1254.9 1401.8,1261.6 1411.8,1263.1 1421.8,1260.6 1431.8,1253.3 1441.8,1251.8 1451.8,1254.3 1461.8,1254.3 1471.8,1256.8 1481.8,1260.2 1491.8,1263.1 1501.8,1266.8 1511.8,1265.8 1521.8,1262.2 1531.8,1256.0 1541.8,1253.3 1551.8,1247.0 1561.8,1248.1 1571.8,1249.5 1581.8,1254.9 1591.8,1261.0 1601.8,1265.8 1611.8,1271.6 1621.8,1273.5 1631.8,1278.3 1641.8,1281.9 1651.8,1281.9 1661.8,1286.7 1671.8,1290.4 1681.8,1288.3 1691.8,1290.8 1701.8,1294.6 1711.8,1295.6 1721.8,1293.3 1731.8,1287.1 1741.8,1281.0 1751.8,1279.4 1761.8,1273.1 1771.8,1274.6 1781.8,1279.4 1791.8,1283.5 1801.8,1287.1 1811.8,1285.6 1821.8,1282.1 1831.8,1283.1 1841.8,1285.6 1851.8,1288.1 1861.8,1288.1 1871.8,1290.4 1881.8,1290.8 1891.8,1294.4 1901.8,1293.3 1911.8,1292.3 1921.8,1294.4 1931.8,1294.6 1941.8,1295.6 1951.8,1299.2 1961.8,1298.1 1971.8,1294.0 1981.8,1287.7 1991.8,1279.8 2001.8,1270.6 2011.8,1260.6 2021.8,1256.8 2031.8,1256.8 2041.8,1256.8 2051.8,1258.2 2061.8,1255.3 2071.8,1249.2 2081.8,1244.4 2091.8,1241.8 2101.8,1245.5 2111.8,1250.5 2121.8,1253.6 2131.8,1259.3 2141.8,1261.2 2151.8,1265.6 2161.8,1267.3 2171.8,1271.1 2181.8,1275.7 2191.8,1277.2 2201.8,1280.9 2211.8,1283.3 2221.8,1287.0 2231.8,1291.4 2241.8,1293.2 2251.8,1295.8 2261.8,1294.7 2271.8,1293.2 2281.8,1292.9 2291.8,1290.3 2301.8,1288.1 2311.8,1289.4 2321.8,1288.1 2331.8,1290.3 2341.8,1289.2 2351.8,1290.8 2361.8,1294.7 2371.8,1296.9 2381.8,1298.4 2391.8,1300.6 2401.8,1300.6 2411.8,1298.4 2421.8,1290.3 2431.8,1290.3 2441.8,1294.3 2451.8,1294.3" fill="none" stroke="#1010f0" stroke-width="1.25" stroke-opacity="0.9" stroke-linejoin="round"/>
<polyline points="11.8,1103.0 21.8,1120.4 31.8,1105.1 41.8,1089.7 51.8,1074.4 61.8,1094.3 71.8,1080.1 81.8,1056.1 91.8,1065.5 101.8,1085.3 111.8,1071.7 121.8,1059.2 131.8,1059.2 141.8,1068.6 151.8,1087.8 161.8,1074.4 171.8,1072.4 181.8,1091.6 191.8,1110.3 201.8,1128.1 211.8,1121.4 221.8,1095.1 231.8,1113.5 241.8,1130.6 251.8,1124.9 261.8,1140.6 271.8,1155.2 281.8,1169.2 291.8,1150.0 301.8,1167.3 311.8,1180.7 321.8,1182.3 331.8,1161.9 341.8,1164.2 351.8,1144.8 361.8,1159.4 371.8,1161.9 381.8,1143.3 391.8,1146.9 401.8,1150.6 411.8,1164.2 421.8,1177.5 431.8,1190.3 441.8,1157.3 451.8,1140.0 461.8,1154.2 471.8,1124.9 481.8,1140.2 491.8,1123.9 501.8,1107.2 511.8,1102.0 521.8,1119.7 531.8,1137.5 541.8,1152.5 551.8,1166.7 561.8,1169.8 571.8,1182.3 581.8,1194.2 591.8,1182.7 601.8,1152.5 611.8,1165.2 621.8,1145.8 631.8,1160.4 641.8,1174.0 651.8,1155.2 661.8,1136.4 671.8,1107.2 681.8,1090.5 691.8,1066.1 701.8,1075.5 711.8,1095.3 721.8,1092.0 731.8,1110.3 741.8,1094.7 751.8,1090.5 761.8,1077.4 771.8,1095.7 781.8,1103.0 791.8,1120.8 801.8,1137.0 811.8,1152.7 821.8,1167.7 831.8,1170.4 841.8,1151.0 851.8,1164.0 861.8,1144.4 871.8,1138.5 881.8,1153.1 891.8,1167.7 901.8,1180.7 911.8,1181.9 921.8,1172.3 931.8,1185.5 941.8,1165.0 951.8,1180.2 961.8,1192.8 971.8,1204.2 981.8,1214.3 991.8,1224.5 1001.8,1201.1 1011.8,1211.5 1021.8,1199.6 1031.8,1210.5 1041.8,1220.5 1051.8,1230.7 1061.8,1227.8 1071.8,1204.9 1081.8,1214.3 1091.8,1203.2 1101.8,1213.2 1111.8,1223.4 1121.8,1233.5 1131.8,1241.8 1141.8,1238.0 1151.8,1246.4 1161.8,1254.3 1171.8,1216.8 1181.8,1204.9 1191.8,1193.8 1201.8,1204.2 1211.8,1204.2 1221.8,1215.1 1231.8,1225.5 1241.8,1202.2 1251.8,1167.7 1261.8,1159.8 1271.8,1174.0 1281.8,1185.9 1291.8,1198.0 1301.8,1209.0 1311.8,1208.0 1321.8,1208.0 1331.8,1217.8 1341.8,1205.9 1351.8,1216.3 1361.8,1226.1 1371.8,1235.5 1381.8,1199.0 1391.8,1177.1 1401.8,1179.2 1411.8,1191.7 1421.8,1203.2 1431.8,1214.0 1441.8,1190.7 1451.8,1180.9 1461.8,1192.8 1471.8,1192.8 1481.8,1182.3 1491.8,1194.2 1501.8,1194.4 1511.8,1205.9 1521.8,1216.8 1531.8,1226.6 1541.8,1213.6 1551.8,1223.0 1561.8,1189.0 1571.8,1200.5 1581.8,1178.2 1591.8,1179.6 1601.8,1191.7 1611.8,1193.2 1621.8,1171.3 1631.8,1184.0 1641.8,1174.4 1651.8,1164.6 1661.8,1178.2 1671.8,1190.7 1681.8,1202.8 1691.8,1180.2 1701.8,1170.2 1711.8,1161.5 1721.8,1153.1 1731.8,1123.3 1741.8,1128.5 1751.8,1144.1 1761.8,1116.0 1771.8,1131.8 1781.8,1147.9 1791.8,1162.9 1801.8,1154.6 1811.8,1124.3 1821.8,1108.7 1831.8,1125.4 1841.8,1141.6 1851.8,1156.7 1861.8,1170.4 1871.8,1173.4 1881.8,1185.5 1891.8,1153.1 1901.8,1134.8 1911.8,1140.0 1921.8,1154.6 1931.8,1169.2 1941.8,1131.2 1951.8,1146.4 1961.8,1110.8 1971.8,1096.1 1981.8,1092.2 1991.8,1088.4 2001.8,1085.7 2011.8,1072.4 2021.8,1091.3 2031.8,1108.8 2041.8,1115.3 2051.8,1132.8 2061.8,1104.4 2071.8,1089.1 2081.8,1096.7 2091.8,1115.3 2101.8,1131.7 2111.8,1148.1 2121.8,1152.1 2131.8,1165.6 2141.8,1136.1 2151.8,1150.3 2161.8,1120.8 2171.8,1137.6 2181.8,1152.5 2191.8,1166.7 2201.8,1129.5 2211.8,1134.6 2221.8,1149.2 2231.8,1163.4 2241.8,1155.8 2251.8,1170.0 2261.8,1183.1 2271.8,1194.1 2281.8,1195.8 2291.8,1206.8 2301.8,1217.0 2311.8,1204.3 2321.8,1215.5 2331.8,1192.3 2341.8,1203.3 2351.8,1203.3 2361.8,1191.9 2371.8,1202.8 2381.8,1180.9 2391.8,1193.0 2401.8,1203.9 2411.8,1214.8 2421.8,1225.3 2431.8,1190.8 2441.8,1179.8 2451.8,1191.9" fill="none" stroke="#ff1212" stroke-width="1.25" stroke-opacity="0.9" stroke-linejoin="round"/>
<polyline points="11.8,1196.9 21.8,1176.1 31.8,1187.5 41.8,1199.0 51.8,1210.5 61.8,1199.6 71.8,1209.5 81.8,1219.5 91.8,1229.3 101.8,1206.3 111.8,1215.7 121.8,1225.1 131.8,1234.1 141.8,1243.3 151.8,1240.8 161.8,1248.1 171.8,1255.4 181.8,1229.7 191.8,1227.2 201.8,1225.5 211.8,1234.5 221.8,1243.3 231.8,1207.0 241.8,1207.0 251.8,1216.8 261.8,1194.8 271.8,1172.9 281.8,1152.1 291.8,1165.6 301.8,1128.1 311.8,1101.6 321.8,1117.6 331.8,1133.3 341.8,1148.9 351.8,1164.6 361.8,1167.3 371.8,1180.2 381.8,1191.7 391.8,1203.2 401.8,1214.7 411.8,1192.1 421.8,1191.7 431.8,1171.3 441.8,1183.4 451.8,1195.5 461.8,1184.8 471.8,1196.9 481.8,1176.1 491.8,1187.5 501.8,1199.0 511.8,1210.5 521.8,1176.7 531.8,1166.7 541.8,1147.9 551.8,1130.2 561.8,1145.2 571.8,1127.4 581.8,1132.2 591.8,1147.9 601.8,1162.5 611.8,1154.8 621.8,1167.7 631.8,1137.5 641.8,1142.1 651.8,1157.3 661.8,1170.9 671.8,1184.4 681.8,1195.9 691.8,1207.4 701.8,1217.8 711.8,1205.9 721.8,1215.3 731.8,1214.3 741.8,1224.1 751.8,1233.9 761.8,1243.3 771.8,1239.7 781.8,1248.1 791.8,1233.0 801.8,1230.7 811.8,1207.4 821.8,1183.8 831.8,1195.5 841.8,1207.0 851.8,1207.0 861.8,1216.8 871.8,1226.6 881.8,1214.3 891.8,1190.7 901.8,1159.0 911.8,1171.9 921.8,1185.5 931.8,1165.0 941.8,1177.1 951.8,1137.5 961.8,1110.3 971.8,1106.2 981.8,1101.4 991.8,1097.2 1001.8,1115.6 1011.8,1111.0 1021.8,1126.6 1031.8,1099.5 1041.8,1084.7 1051.8,1082.2 1061.8,1100.9 1071.8,1119.7 1081.8,1124.3 1091.8,1140.6 1101.8,1134.3 1111.8,1105.1 1121.8,1090.5 1131.8,1075.9 1141.8,1095.7 1151.8,1103.0 1161.8,1109.3 1171.8,1126.0 1181.8,1142.7 1191.8,1158.3 1201.8,1161.9 1211.8,1175.0 1221.8,1143.3 1231.8,1137.5 1241.8,1152.5 1251.8,1167.1 1261.8,1179.2 1271.8,1180.7 1281.8,1149.6 1291.8,1142.3 1301.8,1146.2 1311.8,1160.4 1321.8,1174.4 1331.8,1177.1 1341.8,1189.2 1351.8,1168.8 1361.8,1148.9 1371.8,1141.2 1381.8,1155.2 1391.8,1169.4 1401.8,1183.0 1411.8,1153.1 1421.8,1121.8 1431.8,1093.6 1441.8,1111.4 1451.8,1129.1 1461.8,1135.0 1471.8,1149.6 1481.8,1164.2 1491.8,1156.2 1501.8,1170.4 1511.8,1153.1 1521.8,1132.2 1531.8,1126.0 1541.8,1141.6 1551.8,1112.4 1561.8,1130.2 1571.8,1145.8 1581.8,1160.4 1591.8,1174.0 1601.8,1175.7 1611.8,1189.2 1621.8,1200.5 1631.8,1178.8 1641.8,1190.7 1651.8,1202.8 1661.8,1180.7 1671.8,1181.7 1681.8,1150.0 1691.8,1163.5 1701.8,1177.5 1711.8,1190.0 1721.8,1201.1 1731.8,1212.2 1741.8,1223.0 1751.8,1199.6 1761.8,1210.5 1771.8,1174.4 1781.8,1155.2 1791.8,1148.9 1801.8,1162.5 1811.8,1176.1 1821.8,1189.2 1831.8,1167.1 1841.8,1158.3 1851.8,1128.5 1861.8,1133.3 1871.8,1149.4 1881.8,1153.5 1891.8,1166.7 1901.8,1180.2 1911.8,1193.2 1921.8,1170.9 1931.8,1140.0 1941.8,1157.7 1951.8,1151.4 1961.8,1167.7 1971.8,1180.2 1981.8,1192.1 1991.8,1203.2 2001.8,1213.6 2011.8,1224.1 2021.8,1193.0 2031.8,1169.6 2041.8,1180.9 2051.8,1183.1 2061.8,1194.5 2071.8,1205.7 2081.8,1217.0 2091.8,1204.3 2101.8,1172.2 2111.8,1173.3 2121.8,1185.3 2131.8,1176.1 2141.8,1187.5 2151.8,1157.3 2161.8,1170.4 2171.8,1161.9 2181.8,1142.7 2191.8,1124.7 2201.8,1143.8 2211.8,1159.5 2221.8,1162.3 2231.8,1165.0 2241.8,1177.7 2251.8,1147.0 2261.8,1139.4 2271.8,1143.1 2281.8,1158.0 2291.8,1160.8 2301.8,1164.5 2311.8,1176.6 2321.8,1168.5 2331.8,1180.5 2341.8,1161.3 2351.8,1174.4 2361.8,1186.4 2371.8,1188.2 2381.8,1199.5 2391.8,1178.8 2401.8,1179.4 2411.8,1169.3 2421.8,1138.3 2431.8,1153.6 2441.8,1168.3 2451.8,1159.7" fill="none" stroke="#32cd32" stroke-width="1.25" stroke-opacity="0.9" stroke-linejoin="round"/>
<line x1="2470.8" y1="66" x2="2470.8" y2="1316" stroke="#000" stroke-width="1.4"/>
<line x1="0" y1="1316.2" x2="2471.5" y2="1316.2" stroke="#000" stroke-width="1.6"/>
<g font-family="'DejaVu Sans', 'Liberation Sans', sans-serif" font-size="14" fill="#000" stroke="#000" stroke-width="0.35">
<line x1="2471" y1="117.9" x2="2478" y2="117.9" stroke-width="1.3"/>
<text x="2480" y="123.0" textLength="57.2" lengthAdjust="spacingAndGlyphs">2154,00</text>
<line x1="2471" y1="186.4" x2="2478" y2="186.4" stroke-width="1.3"/>
<text x="2480" y="191.5" textLength="57.2" lengthAdjust="spacingAndGlyphs">2153,00</text>
<line x1="2471" y1="255.0" x2="2478" y2="255.0" stroke-width="1.3"/>
<text x="2480" y="260.1" textLength="57.2" lengthAdjust="spacingAndGlyphs">2152,00</text>
<line x1="2471" y1="323.5" x2="2478" y2="323.5" stroke-width="1.3"/>
<text x="2480" y="328.6" textLength="54.5" lengthAdjust="spacingAndGlyphs">2151,00</text>
<line x1="2471" y1="392.1" x2="2478" y2="392.1" stroke-width="1.3"/>
<text x="2480" y="397.2" textLength="59.0" lengthAdjust="spacingAndGlyphs">2150,00</text>
<line x1="2471" y1="460.6" x2="2478" y2="460.6" stroke-width="1.3"/>
<text x="2480" y="465.7" textLength="57.2" lengthAdjust="spacingAndGlyphs">2149,00</text>
<line x1="2471" y1="529.1" x2="2478" y2="529.1" stroke-width="1.3"/>
<text x="2480" y="534.2" textLength="57.2" lengthAdjust="spacingAndGlyphs">2148,00</text>
<line x1="2471" y1="597.7" x2="2478" y2="597.7" stroke-width="1.3"/>
<text x="2480" y="602.8" textLength="57.2" lengthAdjust="spacingAndGlyphs">2147,00</text>
<line x1="2471" y1="666.2" x2="2478" y2="666.2" stroke-width="1.3"/>
<text x="2480" y="671.3" textLength="57.2" lengthAdjust="spacingAndGlyphs">2146,00</text>
<line x1="2471" y1="734.8" x2="2478" y2="734.8" stroke-width="1.3"/>
<text x="2480" y="739.9" textLength="57.2" lengthAdjust="spacingAndGlyphs">2145,00</text>
<line x1="2471" y1="803.3" x2="2478" y2="803.3" stroke-width="1.3"/>
<text x="2480" y="808.4" textLength="57.2" lengthAdjust="spacingAndGlyphs">2144,00</text>
<line x1="2471" y1="871.8" x2="2478" y2="871.8" stroke-width="1.3"/>
<text x="2480" y="876.9" textLength="57.2" lengthAdjust="spacingAndGlyphs">2143,00</text>
<line x1="2471" y1="940.4" x2="2478" y2="940.4" stroke-width="1.3"/>
<text x="2480" y="945.5" textLength="57.2" lengthAdjust="spacingAndGlyphs">2142,00</text>
<line x1="2471" y1="1008.9" x2="2478" y2="1008.9" stroke-width="1.3"/>
<text x="2480" y="1014.0" textLength="54.5" lengthAdjust="spacingAndGlyphs">2141,00</text>
<line x1="2471" y1="1044.2" x2="2478" y2="1044.2" stroke-width="1.3"/>
<text x="2480" y="1049.3" textLength="19.5" lengthAdjust="spacingAndGlyphs">50</text>
<line x1="2471" y1="1105.5" x2="2478" y2="1105.5" stroke-width="1.3"/>
<text x="2480" y="1110.6" textLength="19.5" lengthAdjust="spacingAndGlyphs">40</text>
<line x1="2471" y1="1168.0" x2="2478" y2="1168.0" stroke-width="1.3"/>
<text x="2480" y="1173.1" textLength="19.5" lengthAdjust="spacingAndGlyphs">30</text>
<line x1="2471" y1="1230.2" x2="2478" y2="1230.2" stroke-width="1.3"/>
<text x="2480" y="1235.3" textLength="19.5" lengthAdjust="spacingAndGlyphs">20</text>
</g>
<polygon points="2472.4,477.2 2482.9,465.9 2543.6,465.9 2543.6,488.4 2482.9,488.4" fill="#b0e0e6" stroke="#202020" stroke-width="1"/>
<text x="2484.8" y="482.4" font-family="'DejaVu Sans', 'Liberation Sans', sans-serif" font-size="14" fill="#000" stroke="#000" stroke-width="0.4" textLength="53.5" lengthAdjust="spacingAndGlyphs">2148,75</text>
<polygon points="2472.4,509.6 2482.9,498.4 2554.6,498.4 2554.6,520.9 2482.9,520.9" fill="#000" stroke="#000" stroke-width="1"/>
<text x="2484.8" y="514.8" font-family="'DejaVu Sans', 'Liberation Sans', sans-serif" font-size="14" fill="#fff" stroke="#fff" stroke-width="0.4" textLength="54.3" lengthAdjust="spacingAndGlyphs">2148,25</text>
<polygon points="2472.4,589.5 2482.9,578.2 2539.7000000000003,578.2 2539.7000000000003,600.8 2482.9,600.8" fill="#008000" stroke="#202020" stroke-width="1"/>
<text x="2484.8" y="594.7" font-family="'DejaVu Sans', 'Liberation Sans', sans-serif" font-size="14" fill="#fff" stroke="#fff" stroke-width="0.4" textLength="51" lengthAdjust="spacingAndGlyphs">2147,12</text>
<polygon points="2472.4,1158.5 2482.9,1147.2 2524.9,1147.2 2524.9,1169.8 2482.9,1169.8" fill="#32cd32" stroke="#202020" stroke-width="1"/>
<text x="2484.8" y="1163.7" font-family="'DejaVu Sans', 'Liberation Sans', sans-serif" font-size="14" fill="#000" stroke="#000" stroke-width="0.4" textLength="35.5" lengthAdjust="spacingAndGlyphs">31,42</text>
<polygon points="2472.4,1191.2 2482.9,1180.0 2531.6,1180.0 2531.6,1202.5 2482.9,1202.5" fill="#ff0000" stroke="#202020" stroke-width="1"/>
<text x="2484.8" y="1196.4" font-family="'DejaVu Sans', 'Liberation Sans', sans-serif" font-size="14" fill="#fff" stroke="#fff" stroke-width="0.4" textLength="41.5" lengthAdjust="spacingAndGlyphs">26,09</text>
<polygon points="2472.4,1293.0 2482.9,1281.8 2519.4,1281.8 2519.4,1304.2 2482.9,1304.2" fill="#0000ff" stroke="#202020" stroke-width="1"/>
<text x="2484.8" y="1298.2" font-family="'DejaVu Sans', 'Liberation Sans', sans-serif" font-size="14" fill="#fff" stroke="#fff" stroke-width="0.4" textLength="31.5" lengthAdjust="spacingAndGlyphs">9,67</text>
<g font-family="'DejaVu Sans', 'Liberation Sans', sans-serif" font-size="14" fill="#000" stroke="#000" stroke-width="0.35" text-anchor="middle">
<line x1="12" y1="1316" x2="12" y2="1324" stroke-width="1.3"/>
<text x="12" y="1341" textLength="35.5" lengthAdjust="spacingAndGlyphs">17:36</text>
<line x1="82" y1="1316" x2="82" y2="1324" stroke-width="1.3"/>
<text x="82" y="1341" textLength="35.5" lengthAdjust="spacingAndGlyphs">17:45</text>
<line x1="152" y1="1316" x2="152" y2="1324" stroke-width="1.3"/>
<text x="152" y="1341" textLength="35.5" lengthAdjust="spacingAndGlyphs">17:52</text>
<line x1="222" y1="1316" x2="222" y2="1324" stroke-width="1.3"/>
<text x="222" y="1341" textLength="38.9" lengthAdjust="spacingAndGlyphs">18:00</text>
<line x1="292" y1="1316" x2="292" y2="1324" stroke-width="1.3"/>
<text x="292" y="1341" textLength="32.8" lengthAdjust="spacingAndGlyphs">18:21</text>
<line x1="362" y1="1316" x2="362" y2="1324" stroke-width="1.3"/>
<text x="362" y="1341" textLength="35.5" lengthAdjust="spacingAndGlyphs">18:34</text>
<line x1="432" y1="1316" x2="432" y2="1324" stroke-width="1.3"/>
<text x="432" y="1341" textLength="32.8" lengthAdjust="spacingAndGlyphs">18:51</text>
<line x1="502" y1="1316" x2="502" y2="1324" stroke-width="1.3"/>
<text x="502" y="1341" textLength="37.2" lengthAdjust="spacingAndGlyphs">19:07</text>
<line x1="572" y1="1316" x2="572" y2="1324" stroke-width="1.3"/>
<text x="572" y="1341" textLength="35.5" lengthAdjust="spacingAndGlyphs">19:24</text>
<line x1="642" y1="1316" x2="642" y2="1324" stroke-width="1.3"/>
<text x="642" y="1341" textLength="35.5" lengthAdjust="spacingAndGlyphs">19:48</text>
<line x1="712" y1="1316" x2="712" y2="1324" stroke-width="1.3"/>
<text x="712" y="1341" textLength="41.6" lengthAdjust="spacingAndGlyphs">20:02</text>
<line x1="782" y1="1316" x2="782" y2="1324" stroke-width="1.3"/>
<text x="782" y="1341" textLength="37.2" lengthAdjust="spacingAndGlyphs">20:15</text>
<line x1="852" y1="1316" x2="852" y2="1324" stroke-width="1.3"/>
<text x="852" y="1341" textLength="39.9" lengthAdjust="spacingAndGlyphs">20:39</text>
<line x1="922" y1="1316" x2="922" y2="1324" stroke-width="1.3"/>
<text x="922" y="1341" textLength="34.5" lengthAdjust="spacingAndGlyphs">21:01</text>
<line x1="992" y1="1316" x2="992" y2="1324" stroke-width="1.3"/>
<text x="992" y="1341" textLength="32.8" lengthAdjust="spacingAndGlyphs">21:16</text>
<line x1="1062" y1="1316" x2="1062" y2="1324" stroke-width="1.3"/>
<text x="1062" y="1341" textLength="32.8" lengthAdjust="spacingAndGlyphs">21:31</text>
<line x1="1132" y1="1316" x2="1132" y2="1324" stroke-width="1.3"/>
<text x="1132" y="1341" textLength="35.5" lengthAdjust="spacingAndGlyphs">21:46</text>
<line x1="1202" y1="1316" x2="1202" y2="1324" stroke-width="1.3"/>
<text x="1202" y="1341" textLength="35.5" lengthAdjust="spacingAndGlyphs">21:59</text>
<line x1="1272" y1="1316" x2="1272" y2="1324" stroke-width="1.3"/>
<text x="1272" y="1341" textLength="35.5" lengthAdjust="spacingAndGlyphs">22:21</text>
<line x1="1342" y1="1316" x2="1342" y2="1324" stroke-width="1.3"/>
<text x="1342" y="1341" textLength="38.2" lengthAdjust="spacingAndGlyphs">22:33</text>
<line x1="1412" y1="1316" x2="1412" y2="1324" stroke-width="1.3"/>
<text x="1412" y="1341" textLength="38.2" lengthAdjust="spacingAndGlyphs">22:44</text>
<line x1="1482" y1="1316" x2="1482" y2="1324" stroke-width="1.3"/>
<text x="1482" y="1341" textLength="38.2" lengthAdjust="spacingAndGlyphs">22:59</text>
<line x1="1571.5" y1="1316" x2="1571.5" y2="1324" stroke-width="1.3"/>
<text x="1571.5" y="1341" textLength="22.7" lengthAdjust="spacingAndGlyphs">8/3</text>
<line x1="1652" y1="1316" x2="1652" y2="1324" stroke-width="1.3"/>
<text x="1652" y="1341" textLength="39.9" lengthAdjust="spacingAndGlyphs">04:27</text>
<line x1="1722" y1="1316" x2="1722" y2="1324" stroke-width="1.3"/>
<text x="1722" y="1341" textLength="41.6" lengthAdjust="spacingAndGlyphs">07:09</text>
<line x1="1792" y1="1316" x2="1792" y2="1324" stroke-width="1.3"/>
<text x="1792" y="1341" textLength="38.9" lengthAdjust="spacingAndGlyphs">09:01</text>
<line x1="1862" y1="1316" x2="1862" y2="1324" stroke-width="1.3"/>
<text x="1862" y="1341" textLength="40.6" lengthAdjust="spacingAndGlyphs">10:00</text>
<line x1="1932" y1="1316" x2="1932" y2="1324" stroke-width="1.3"/>
<text x="1932" y="1341" textLength="34.5" lengthAdjust="spacingAndGlyphs">10:12</text>
<line x1="2002" y1="1316" x2="2002" y2="1324" stroke-width="1.3"/>
<text x="2002" y="1341" textLength="37.2" lengthAdjust="spacingAndGlyphs">10:25</text>
<line x1="2072" y1="1316" x2="2072" y2="1324" stroke-width="1.3"/>
<text x="2072" y="1341" textLength="34.5" lengthAdjust="spacingAndGlyphs">10:41</text>
<line x1="2142" y1="1316" x2="2142" y2="1324" stroke-width="1.3"/>
<text x="2142" y="1341" textLength="34.5" lengthAdjust="spacingAndGlyphs">11:09</text>
<line x1="2212" y1="1316" x2="2212" y2="1324" stroke-width="1.3"/>
<text x="2212" y="1341" textLength="32.8" lengthAdjust="spacingAndGlyphs">11:57</text>
<line x1="2282" y1="1316" x2="2282" y2="1324" stroke-width="1.3"/>
<text x="2282" y="1341" textLength="35.5" lengthAdjust="spacingAndGlyphs">12:46</text>
<line x1="2352" y1="1316" x2="2352" y2="1324" stroke-width="1.3"/>
<text x="2352" y="1341" textLength="35.5" lengthAdjust="spacingAndGlyphs">13:53</text>
<line x1="2422" y1="1316" x2="2422" y2="1324" stroke-width="1.3"/>
<text x="2422" y="1341" textLength="35.5" lengthAdjust="spacingAndGlyphs">15:29</text>
</g>
<rect x="699.8" y="1324" width="70.2" height="22" fill="#000"/>
<text x="735" y="1341" text-anchor="middle" font-family="'DejaVu Sans', 'Liberation Sans', sans-serif" font-size="14" fill="#fff" stroke="#fff" stroke-width="0.4" textLength="66" lengthAdjust="spacingAndGlyphs">20:04:47</text>
<text x="4" y="1064" font-family="'DejaVu Sans', 'Liberation Sans', sans-serif" font-size="15" fill="#000" textLength="137" lengthAdjust="spacingAndGlyphs">t2U_DA_indicator</text>
<text x="4" y="1313" font-family="'Liberation Sans', sans-serif" font-size="13" fill="#0a0a0a" textLength="154.5" lengthAdjust="spacingAndGlyphs">© 2016 NinjaTrader, LLC</text>
</svg>
<div id="titlebar" class="abs"></div>
<svg class="abs" style="left:3px;top:4.9px" width="18" height="18.2" viewBox="0 0 18 18.2">
<rect x="0" y="0" width="18" height="18.2" rx="0.8" fill="#b4b7dc"/>
<rect x="0.9" y="0.9" width="16.2" height="16.4" fill="#d6d8f0"/>
<g fill="#f0f0fb"><rect x="1.6" y="1.6" width="3.2" height="3.2"/><rect x="5.6" y="1.6" width="3.2" height="3.2"/><rect x="9.6" y="1.6" width="3.2" height="3.2"/><rect x="13.6" y="1.6" width="2.8" height="3.2"/>
<rect x="1.6" y="5.6" width="3.2" height="3.2"/><rect x="5.6" y="5.6" width="3.2" height="3.2"/><rect x="9.6" y="5.6" width="3.2" height="3.2"/><rect x="13.6" y="5.6" width="2.8" height="3.2"/>
<rect x="1.6" y="9.6" width="3.2" height="3.2"/><rect x="5.6" y="9.6" width="3.2" height="3.2"/><rect x="9.6" y="9.6" width="3.2" height="3.2"/><rect x="13.6" y="9.6" width="2.8" height="3.2"/>
<rect x="1.6" y="13.6" width="3.2" height="3"/><rect x="5.6" y="13.6" width="3.2" height="3"/><rect x="9.6" y="13.6" width="3.2" height="3"/><rect x="13.6" y="13.6" width="2.8" height="3"/></g>
<path d="M1.4 14.6 L4 13.4 L5.9 11.5 L7.3 8.7 L8.7 5.9 L9.8 4.5 L11 5.9 L12.9 9.2 L14.8 8.9 L16.9 8.5" fill="none" stroke="#2f7fe0" stroke-width="1.5" stroke-linejoin="round"/>
<path d="M1.2 7.5 L4 5.9 L6.3 5.2 L8.7 8.2 L11 7.3 L13.4 5.4 L16.4 2.6" fill="none" stroke="#52c040" stroke-width="1.7" stroke-linejoin="round"/>
<path d="M14.6 2.2 L16.8 2 L16.6 4.4 Z" fill="#52c040"/>
</svg>
<div class="t" id="ttl" style="left:27.6px;top:4.6px;font-size:15.3px;line-height:21px;color:#999;transform:scaleX(.919);transform-origin:0 0">ES 09-16 (4 Range)&nbsp; 03.08.2016</div>
<div class="abs" style="left:2336px;top:-2px;width:42.5px;height:25.5px;box-sizing:border-box;border:2px solid #0078d7;background:#efefef"></div>
<div class="t" style="left:2354.5px;top:2.5px;font-size:15px;line-height:17px;color:#222">L</div>
<svg class="abs" style="left:2328px;top:6px" width="9" height="11" viewBox="0 0 9 11"><path d="M8.5 5.5H2.5M5 2L1.5 5.5L5 9" fill="none" stroke="#222" stroke-width="1.8"/></svg>
<svg class="abs" style="left:2400px;top:0" width="150" height="29" viewBox="0 0 150 29" fill="none" stroke="#777" stroke-width="1"><path d="M10 13.5H22"/><path d="M66.5 10.5H75.5V19.5H66.5Z"/><path d="M68.5 10.5V8.5H77.5V17.5H75.5"/><path d="M123 8L135 20M135 8L123 20"/></svg>
<div id="toolbarbg" class="abs"></div><div id="toolbar" class="abs"></div>
<div class="abs" style="left:3.8px;top:33.9px;width:2.3px;height:2.3px;background:#9c9c9c;box-shadow:1px 1px 0 #fff"></div>
<div class="abs" style="left:3.8px;top:39.0px;width:2.3px;height:2.3px;background:#9c9c9c;box-shadow:1px 1px 0 #fff"></div>
<div class="abs" style="left:3.8px;top:44.0px;width:2.3px;height:2.3px;background:#9c9c9c;box-shadow:1px 1px 0 #fff"></div>
<div class="abs" style="left:3.8px;top:49.1px;width:2.3px;height:2.3px;background:#9c9c9c;box-shadow:1px 1px 0 #fff"></div>
<div class="sep" style="left:15px"></div>
<div class="t" id="tb1" style="left:24.4px;top:33.1px;-webkit-text-stroke:0.25px #000;font-size:15.6px;line-height:21px;letter-spacing:-0.5px;transform:scaleX(.9);transform-origin:0 0">ES 09-16</div>
<div class="dd" style="left:87.5px"></div>
<div class="t" id="tb2" style="left:104.1px;top:33.1px;-webkit-text-stroke:0.25px #000;font-size:15.6px;line-height:21px;letter-spacing:-0.02px;transform:scaleX(.9);transform-origin:0 0">4 Range</div>
<div class="dd" style="left:165px"></div>
<div class="sep" style="left:180px"></div>
<svg class="abs" style="left:186px;top:34px" width="21" height="20" viewBox="0 0 21 20">
<path d="M3.4 0.8V19M9.9 0.3V18.6M16.4 0.8V19" stroke="#000" stroke-width="1.6"/>
<rect x="1.2" y="3" width="4.4" height="13" rx="1.2" fill="#4ee02a" stroke="#1d7a10" stroke-width="0.9"/>
<rect x="7.7" y="2.5" width="4.4" height="13.5" rx="1.2" fill="#4ee02a" stroke="#1d7a10" stroke-width="0.9"/>
<rect x="14.2" y="3" width="4.4" height="13" rx="1.2" fill="#ee3a2a" stroke="#8a1408" stroke-width="0.9"/>
</svg>
<div class="dd" style="left:208.5px"></div>
<svg class="abs" style="left:223px;top:34px" width="20" height="20" viewBox="0 0 20 20">
<path d="M1 18.6 L2.6 13.6 L13.4 1.6 L17.4 4.8 L6.2 17 Z" fill="#f5d90a" stroke="#8a6d10" stroke-width="0.9"/>
<path d="M13.4 1.6 L14.8 0.6 Q16.6 0.2 18.2 2 Q18.8 3.4 17.4 4.8 Z" fill="#e8505a" stroke="#9a2a30" stroke-width="0.8"/>
<path d="M1 18.6 L2.6 13.6 L6.2 17 Z" fill="#e9c9a0" stroke="#7a6a50" stroke-width="0.7"/>
<path d="M1 18.6 L1.7 16.6 L3 17.9 Z" fill="#333"/>
<path d="M4.5 15.2 L15.4 3.2" stroke="#c9a800" stroke-width="1"/>
</svg>
<div class="dd" style="left:245px"></div>
<svg class="abs" style="left:259px;top:34px" width="22" height="21" viewBox="0 0 22 21">
<path d="M1.5 19.5 L8 12.5" stroke="#555" stroke-width="2.6" stroke-linecap="round"/>
<path d="M2 19 L7.5 13" stroke="#bbb" stroke-width="0.8"/>
<circle cx="10.8" cy="9.8" r="4.9" fill="#9ec8f2" stroke="#8a8a8a" stroke-width="1.5"/>
<circle cx="9.6" cy="8.6" r="2" fill="#d4e9fb"/>
<path d="M17.8 1V8M14.3 4.5H21.3" stroke="#12a32a" stroke-width="2.2"/>
</svg>
<svg class="abs" style="left:288px;top:34px" width="22" height="21" viewBox="0 0 22 21">
<path d="M1.5 19.5 L8 12.5" stroke="#bcbcbc" stroke-width="2.6" stroke-linecap="round"/>
<circle cx="10.8" cy="9.8" r="4.9" fill="#d4d4d4" stroke="#c4c4c4" stroke-width="1.5"/>
<path d="M14.3 4.5H21.3" stroke="#c4c4c4" stroke-width="2"/>
</svg>
<div class="sep" style="left:317.5px"></div>
<svg class="abs" style="left:324px;top:34px" width="20" height="20" viewBox="0 0 20 20">
<path d="M9.8 1V7.2M9.8 12.6V19M1 9.9H7.2M12.4 9.9H18.6" stroke="#000" stroke-width="2.2"/></svg>
<div class="dd" style="left:346.3px"></div>
<svg class="abs" style="left:361px;top:33px" width="20" height="22" viewBox="0 0 20 22">
<rect x="2" y="1.5" width="17" height="18.5" fill="#fafafa" stroke="#8a8a8a" stroke-width="1.1"/>
<path d="M1.2 20.5 L6.5 14.5" stroke="#555" stroke-width="2.6" stroke-linecap="round"/>
<circle cx="10" cy="10.6" r="4.9" fill="#9ec8f2" stroke="#9a9a9a" stroke-width="1.5"/>
<circle cx="8.8" cy="9.4" r="2" fill="#d4e9fb"/>
</svg>
<div class="sep" style="left:390.5px"></div>
<svg class="abs" style="left:397px;top:33px" width="22" height="22" viewBox="0 0 22 22">
<path d="M3 5H20M3 9H20M3 13H20M3 17H20" stroke="#d8d8d8" stroke-width="1"/>
<rect x="1" y="1.8" width="8" height="3.6" rx="1.6" fill="#4ee02a" stroke="#1d7a10" stroke-width="0.8"/>
<rect x="1" y="11.4" width="8" height="3.6" rx="1.6" fill="#ee3a2a" stroke="#8a1408" stroke-width="0.8"/>
<path d="M13.2 2.5V21" stroke="#000" stroke-width="1"/>
<rect x="12" y="4.5" width="2.6" height="16.5" fill="#4ee02a" stroke="#1d7a10" stroke-width="0.7"/>
<path d="M17.4 12.5V21" stroke="#000" stroke-width="1"/>
<rect x="16.2" y="15" width="2.6" height="6" fill="#ee3a2a" stroke="#8a1408" stroke-width="0.7"/>
</svg>
<svg class="abs" style="left:426px;top:33px" width="21" height="22" viewBox="0 0 21 22">
<rect x="0.6" y="1.6" width="19.4" height="18.8" fill="#d6d6d6" stroke="#8c8c8c" stroke-width="1"/>
<path d="M1 5.5H20M1 9.5H20M1 13.5H20M1 17.5H20" stroke="#f2f2f2" stroke-width="0.8"/>
<path d="M4.6 4.5V20M10.2 2V16.5M15.8 6V20" stroke="#000" stroke-width="1.3"/>
<rect x="2.9" y="6.8" width="3.4" height="10.6" rx="1" fill="#4ee02a" stroke="#1d7a10" stroke-width="0.8"/>
<rect x="8.5" y="4.2" width="3.4" height="9.8" rx="1" fill="#4ee02a" stroke="#1d7a10" stroke-width="0.8"/>
<rect x="14.1" y="8.4" width="3.4" height="9" rx="1" fill="#ee3a2a" stroke="#8a1408" stroke-width="0.8"/>
</svg>
<svg class="abs" style="left:455px;top:33px" width="21" height="22" viewBox="0 0 21 22">
<rect x="0.6" y="1.6" width="19.2" height="18.8" fill="#dcdcdc" stroke="#8c8c8c" stroke-width="1"/>
<rect x="1.2" y="17" width="18" height="3" fill="#bdbdbd"/>
<path d="M2.5 10 L5 6.5 L7 8 L10.5 3.8 L13 5.6 L15 4.8 L18 8.2" fill="none" stroke="#2aa868" stroke-width="1.2"/>
<path d="M2.5 15.2 L5 12 L6.5 13.2 L9.5 10.8 L12 11.8 L14.5 11 L18 14.6" fill="none" stroke="#e03a3a" stroke-width="1.2"/>
</svg>
<svg class="abs" style="left:485px;top:33px" width="18" height="22" viewBox="0 0 18 22">
<path d="M1.4 2.2H11.4L16 6.6V20H1.4Z" fill="#fdfdfd" stroke="#909090" stroke-width="1"/>
<path d="M11.4 2.2V6.6H16" fill="#e8e8e8" stroke="#909090" stroke-width="0.8"/>
<text x="8.4" y="17.2" font-family="Liberation Sans, sans-serif" font-weight="bold" font-size="14.5" fill="#1f9a2f" text-anchor="middle">$</text>
</svg>
<svg class="abs" style="left:513px;top:33px" width="19" height="22" viewBox="0 0 19 22">
<rect x="1" y="1.4" width="16.6" height="19" fill="#e6eaf8" stroke="#8a8a9a" stroke-width="1"/>
<rect x="3" y="3.6" width="12.6" height="3" fill="#5aa7ea" stroke="#3a86d0" stroke-width="0.6"/>
<rect x="3" y="8.6" width="3" height="9.6" fill="#b57cf5" stroke="#8a55d8" stroke-width="0.6"/>
<path d="M8 10.4H15.4M8 13.4H15.4M8 16.4H15.4" stroke="#c6cce6" stroke-width="1.3"/>
</svg>
<div id="scroll" class="abs"></div><div id="thumb" class="abs"></div><svg class="abs" style="left:5px;top:1368px" width="10" height="13" viewBox="0 0 10 13"><path d="M8 1.5L2.5 6.5L8 11.5" fill="none" stroke="#606060" stroke-width="2"/></svg><svg class="abs" style="left:2543px;top:1368px" width="10" height="13" viewBox="0 0 10 13"><path d="M2 1.5L7.5 6.5L2 11.5" fill="none" stroke="#606060" stroke-width="2"/></svg>
<div id="dlg" class="abs">
<div id="dlgtitle" class="abs"></div>
<div class="t" id="dlgt" style="left:10.2px;top:8.9px;font-size:15px;line-height:21px">Indicators</div>
<div id="dlgclose" class="abs"><svg width="24" height="24" viewBox="0 0 24 24"><path d="M9.2 9.3L15.4 14.7M15.4 9.3L9.2 14.7" stroke="#fff" stroke-width="2.1"/></svg></div>
<div class="abs" style="left:0;top:39.3px;width:711.6px;height:2px;background:#6c6c6c"></div>
<div class="abs" style="left:0;top:41.2px;width:711.6px;height:1.3px;background:#a4a4a4"></div>
<div class="abs" style="left:710px;top:41px;width:1.6px;height:479px;background:#b4b4b4"></div>
<div class="abs" style="left:711.6px;top:40px;width:1.4px;height:564px;background:#fff"></div>
<div class="abs" style="left:0;top:602.8px;width:713px;height:1.2px;background:#fff"></div>
<div class="abs" style="left:0;top:40px;width:1.4px;height:480px;background:#808080"></div>
<div class="abs" style="left:1.4px;top:41px;width:1.4px;height:478px;background:#a0a0a0"></div>
<div class="abs" style="left:1px;top:519.5px;width:712px;height:2px;background:#fafafa"></div>
<div class="lb" style="left:2.6px;top:42px;width:314px;height:264.5px;border-color:#828790">
<div class="li" style="top:1.50px">t2U_Bandit_K</div>
<div class="li" style="top:17.77px">t2U_BanditTrader</div>
<div class="li" style="top:34.04px">t2U_BBeam</div>
<div class="li" style="top:50.31px">t2U_BigMo</div>
<div class="li" style="top:66.58px">t2U_BigMo_Cluster</div>
<div class="li" style="top:82.85px">t2U_BigMo_K</div>
<div class="li" style="top:99.12px">t2U_BigMo_PS</div>
<div class="li" style="top:115.39px">t2U_BigMo_Strat</div>
<div class="li" style="top:131.66px">t2U_BigMoAlert</div>
<div class="li" style="top:147.93px">t2U_BM_S</div>
<div class="li" style="top:164.20px">t2U_Breakout</div>
<div class="li" style="top:180.47px">t2U_DA_indicator</div>
<div class="li" style="top:196.74px">t2U_DailyHighLow</div>
<div class="li" style="top:213.01px">t2U_DayTrader</div>
<div class="li" style="top:229.28px">t2U_DynamicSR</div>
<div class="li" style="top:245.55px">t2U_EWF</div>
<div class="abs" style="left:290.6px;top:1px;width:20.4px;height:260.5px;background:#f0f0f0"></div>
<div class="abs" style="left:290.6px;top:142px;width:18.7px;height:21px;background:#cdcdcd"></div>
<svg class="abs" style="left:294px;top:7px" width="12" height="9" viewBox="0 0 12 8"><path d="M2.2 7L6 3.1L9.8 7" fill="none" stroke="#5a5a5a" stroke-width="2.4"/></svg>
<svg class="abs" style="left:294px;top:246.5px" width="12" height="9" viewBox="0 0 12 8"><path d="M2.2 1.2L6 5.1L9.8 1.2" fill="none" stroke="#5a5a5a" stroke-width="2.4"/></svg>
</div>
<div class="lb" style="left:2.6px;top:313px;width:314px;height:151.4px">
<div class="li" style="top:2.40px">t2U_DA_indicator</div>
<div class="li" style="top:18.60px">t2U_DailyHighLow</div>
<div class="li" style="top:34.80px">t2U_DayTrader</div>
<div class="abs" style="left:1.6px;top:50.1px;width:309px;height:16.2px;background:#3399ff"></div>
<div class="li" style="top:51.00px;color:#fff">t2U_DynamicSR</div>
</div>
<div class="btn" style="left:31.2px;top:484.3px;width:82.6px;height:28.5px;line-height:25px;background:#cccccc;border-color:#bfbfbf;color:#a3a3a3;text-shadow:1px 1px 0 #fff"><span>New</span></div>
<div class="btn" style="left:202.8px;top:484.3px;width:82.4px;height:28.5px;line-height:25px"><span>Remove</span></div>
<div class="btn" style="left:111.1px;top:559.3px;width:99px;height:28.5px;line-height:25px"><span>OK</span></div>
<div class="btn" style="left:307.4px;top:559.3px;width:98.2px;height:28.5px;line-height:23px;border:2px solid #0078d7"><span>Apply</span></div>
<div class="btn" style="left:504px;top:559.3px;width:97.8px;height:28.5px;line-height:25px"><span>Close</span></div>
<div class="abs" style="left:386.2px;top:42.4px;width:323.8px;height:400.2px;box-sizing:border-box;border:1.6px solid #a5a5a5;border-top:none;background:#fff;overflow:hidden">
<div class="abs" style="left:0;top:0;width:300.8px;height:380.6px;background:#d2d2d2"></div>
<div class="abs" style="left:0;top:0;width:18px;height:380.6px;background:#c8c8c8"></div>
<div class="pgcat" style="top:0.60px"><div class="box" style="top:4px"><i></i></div><span>Time Period Settings</span></div>
<div class="pgn" style="top:21.39px;background:#fff"><span>Period</span></div>
<div class="pgv" style="top:21.39px"><span style="letter-spacing:0.8px">140</span></div>
<div class="pgn" style="top:41.38px;background:#fff"><span>Periodtype</span></div>
<div class="pgv" style="top:41.38px"><span>Minute</span></div>
<div class="pgn" style="top:61.37px;background:#fff"><span>useHigherTimeFrame</span></div>
<div class="pgv" style="top:61.37px"><span>True</span></div>
<div class="pgcat" style="top:80.56px"><div class="box" style="top:4px"><i></i></div><span>Data</span></div>
<div class="pgn" style="top:101.35px;background:#fff"><span>Calculate on bar close</span></div>
<div class="pgv" style="top:101.35px"><span>True</span></div>
<div class="pgn" style="top:121.34px;background:#fff"><span>Input series</span></div>
<div class="pgv" style="top:121.34px"><span style="letter-spacing:0.5px">ES 09-16 (4 Range)</span></div>
<div class="pgn" style="top:141.33px;background:#fff"><span>Maximum bars look back</span></div>
<div class="pgv" style="top:141.33px"><span>TwoHundredFiftySix</span></div>
<div class="pgcat" style="top:160.52px"><div class="box" style="top:4px"><i></i></div><span>Visual</span></div>
<div class="pgn" style="top:181.31px;background:#fff"><span>Auto scale</span></div>
<div class="pgv" style="top:181.31px"><span>True</span></div>
<div class="pgn" style="top:201.30px;background:#fff"><span>Displacement</span></div>
<div class="pgv" style="top:201.30px"><span style="letter-spacing:0.5px">0</span></div>
<div class="pgn" style="top:221.29px;background:#fff"><span>Display in Data Box</span></div>
<div class="pgv" style="top:221.29px"><span>True</span></div>
<div class="pgn" style="top:241.28px;background:#c8c8c8"><span>Label</span></div>
<div class="pgv" style="top:241.28px"><span style="left:3px;letter-spacing:0.3px">t2U_DynamicSR</span></div>
<div class="pgn" style="top:261.27px;background:#fff"><span>Panel</span></div>
<div class="pgv" style="top:261.27px"><span>Same as input series</span></div>
<div class="pgn" style="top:281.26px;background:#fff"><span>Price marker(s)</span></div>
<div class="pgv" style="top:281.26px"><span>True</span></div>
<div class="pgn" style="top:301.25px;background:#fff"><span>Scale justification</span></div>
<div class="pgv" style="top:301.25px"><span>Right</span></div>
<div class="pgcat" style="top:320.44px"><div class="box" style="top:4px"><i></i></div><span>Plots</span></div>
<div class="box" style="top:344.43px"><i></i><b></b></div>
<div class="pgn" style="top:341.23px;background:#fff"><span>SwingPlotHigh</span></div>
<div class="pgv" style="top:341.23px"><svg class="abs" style="left:1px;top:0.5px" width="26" height="17" viewBox="0 0 26 17"><rect x="0.7" y="0.7" width="24.3" height="15.4" fill="#fff" stroke="#000" stroke-width="1.3"/><path d="M5.2 15.5V9.5M10.2 15.5V11M15.2 15.5V7.5M20 15.5V5" stroke="#000" stroke-width="2"/><path d="M4.2 15H21" stroke="#000" stroke-width="2"/></svg><span style="left:37px">Hash; Solid; 1px</span></div>
<div class="box" style="top:364.42px"><i></i><b></b></div>
<div class="pgn" style="top:361.22px;background:#fff"><span>SwingPlotLow</span></div>
<div class="pgv" style="top:361.22px"><svg class="abs" style="left:1px;top:0.5px" width="26" height="17" viewBox="0 0 26 17"><rect x="0.7" y="0.7" width="24.3" height="15.4" fill="#fff" stroke="#000" stroke-width="1.3"/><path d="M5.2 15.5V9.5M10.2 15.5V11M15.2 15.5V7.5M20 15.5V5" stroke="#000" stroke-width="2"/><path d="M4.2 15H21" stroke="#000" stroke-width="2"/></svg><span style="left:37px">Hash; Solid; 1px</span></div>
<div class="abs" style="left:300.8px;top:0;width:21px;height:399px;background:#f0f0f0"></div>
<div class="abs" style="left:304.6px;top:151px;width:16px;height:227px;background:#c6c6c6"></div>
<svg class="abs" style="left:305px;top:6.3px" width="12" height="9" viewBox="0 0 12 8"><path d="M2.2 7L6 3.1L9.8 7" fill="none" stroke="#5a5a5a" stroke-width="2.4"/></svg>
<svg class="abs" style="left:305px;top:384.5px" width="12" height="9" viewBox="0 0 12 8"><path d="M2.2 1.2L6 5.1L9.8 1.2" fill="none" stroke="#5a5a5a" stroke-width="2.4"/></svg>
</div>
<div class="abs" style="left:386.3px;top:447px;width:323.6px;height:72.6px;box-sizing:border-box;border:1.5px solid #a5a5a5;background:#f0f0f0"></div>
<div class="t" style="left:393px;top:448.5px;font-size:14.3px;font-weight:bold;line-height:20px">Label</div>
<div class="t" id="desc" style="left:392.6px;top:467.5px;font-size:14px;line-height:20px">support and resist indicator</div>
<svg class="abs" style="left:698.6px;top:590px" width="14" height="14" viewBox="0 0 14 14" fill="#bcbcbc"><rect x="9.5" y="9.5" width="2.2" height="2.2"/><rect x="9.5" y="5.5" width="2.2" height="2.2"/><rect x="5.5" y="9.5" width="2.2" height="2.2"/><rect x="9.5" y="1.5" width="2.2" height="2.2"/><rect x="5.5" y="5.5" width="2.2" height="2.2"/><rect x="1.5" y="9.5" width="2.2" height="2.2"/></svg>
</div>
<svg class="abs" style="left:690px;top:1318px;overflow:visible" width="1200" height="70" viewBox="0 0 1200 70"><defs><filter id="glow" x="-5%" y="-40%" width="110%" height="180%"><feGaussianBlur stdDeviation="2.0"/></filter></defs><g transform="translate(26 40) scale(1.3 1)" font-family="'Liberation Serif', 'DejaVu Serif', serif" font-style="italic" font-size="29.5"><text x="0" y="0" fill="#fff" stroke="#fff" stroke-width="4.5" filter="url(#glow)" textLength="856.9" lengthAdjust="spacing">www.forex-warez.com, andreybbrv@gmail.com, Skype: andreybbrv</text><text x="0" y="0" fill="#ff2a2a" stroke="#ff2a2a" stroke-width="0.45" textLength="856.9" lengthAdjust="spacing">www.forex-warez.com, andreybbrv@gmail.com, Skype: andreybbrv</text></g></svg>
</body></html>
